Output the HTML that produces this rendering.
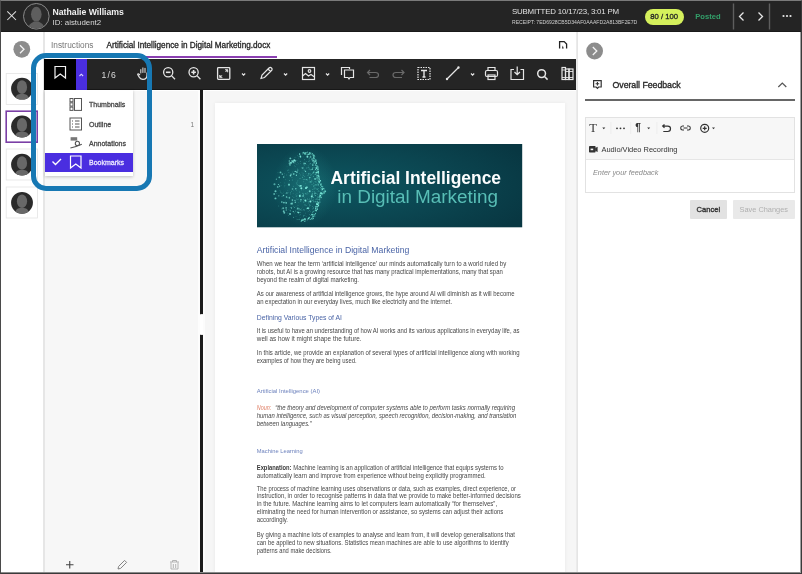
<!DOCTYPE html>
<html><head><meta charset="utf-8">
<style>
*{box-sizing:border-box;margin:0;padding:0}
html,body{width:802px;height:574px;overflow:hidden;background:#fff;font-family:"Liberation Sans",sans-serif}
.a{position:absolute}
.t{position:absolute;white-space:nowrap;line-height:1}
svg{position:absolute;overflow:visible}
</style></head><body>
<div class="a" style="left:0;top:0;width:802px;height:574px;background:#fff;will-change:transform">

<!-- HEADER -->
<div class="a" style="left:0;top:0;width:802px;height:32px;background:#242424;border-bottom:1px solid #1a1a1a"></div>
<svg style="left:0;top:0" width="802" height="32">
  <path d="M7.3 11.3 L16 20 M16 11.3 L7.3 20" stroke="#dedede" stroke-width="1.05" fill="none"/>
  <circle cx="36.3" cy="16.3" r="12.8" fill="#2a2a2a" stroke="#8a8a8a" stroke-width="1"/>
  <clipPath id="ch"><circle cx="36.3" cy="16.3" r="12.3"/></clipPath><g clip-path="url(#ch)" fill="#5e5e5e"><ellipse cx="36.3" cy="14.2" rx="5.3" ry="7.4"/><path d="M28.2 30 c0 -3.6 1.6 -6.4 4.2 -7.4 l1.6 -1.2 h4.6 l1.6 1.2 c2.6 1 4.2 3.8 4.2 7.4z"/></g>
  <!-- separators -->
  <rect x="732.8" y="3.5" width="1.4" height="26" fill="#5e5e5e"/>
  <rect x="768.8" y="3.5" width="1.4" height="26" fill="#5e5e5e"/>
  <path d="M743.5 12.5 L739.5 16.5 L743.5 20.5" stroke="#e6e6e6" stroke-width="1.3" fill="none"/>
  <path d="M758.5 12.5 L762.5 16.5 L758.5 20.5" stroke="#e6e6e6" stroke-width="1.3" fill="none"/>
  <circle cx="783.5" cy="16" r="1.1" fill="#e6e6e6"/><circle cx="787" cy="16" r="1.1" fill="#e6e6e6"/><circle cx="790.5" cy="16" r="1.1" fill="#e6e6e6"/>
</svg>
<div class="t" style="left:52.5px;top:7.7px;font-size:8.7px;font-weight:700;color:#f2f2f2">Nathalie Williams</div>
<div class="t" style="left:52.5px;top:19px;font-size:7.9px;color:#d8d8d8">ID: aistudent2</div>
<div class="t" style="left:512px;top:7.9px;font-size:7.9px;letter-spacing:-0.2px;color:#e0e0e0">SUBMITTED 10/17/23, 3:01 PM</div>
<div class="t" style="left:512px;top:19.5px;font-size:5.1px;color:#cfcfcf">RECEIPT: 7ED6928CB5D34AF0AAAFD2A813BF2E7D</div>
<div class="a" style="left:645px;top:8.5px;width:38.5px;height:16.5px;border-radius:8.25px;background:#d5f05c"></div>
<div class="t" style="left:650.3px;top:12.6px;font-size:7.7px;color:#262626;-webkit-text-stroke:0.3px #262626">80 / 100</div>
<div class="t" style="left:695.3px;top:13px;font-size:7.6px;font-weight:700;color:#33a06a">Posted</div>


<!-- LEFT STRIP -->
<div class="a" style="left:43px;top:32px;width:1.5px;height:542px;background:#e6e6e6"></div>
<svg style="left:0;top:31px" width="43" height="543">
  <circle cx="21.8" cy="18.3" r="8.4" fill="#8c8c8c"/>
  <path d="M20 14.3 L24 18.3 L20 22.3" stroke="#f4f4f4" stroke-width="1.3" fill="none"/>
</svg>
<svg style="left:0;top:0" width="45" height="240">
<rect x="6.2" y="73.5" width="31.3" height="31" fill="#fff" stroke="#e4e4e4" stroke-width="0.8"/>
<clipPath id="c0"><circle cx="22" cy="88.7" r="10.9"/></clipPath>
<circle cx="22" cy="88.7" r="10.9" fill="#2a2a2a"/>
<g clip-path="url(#c0)" fill="#686868"><ellipse cx="22" cy="87.1" rx="5.1" ry="6.8"/><path d="M15.0 100.7 c0 -3 1 -5.5 3 -6.2 l2 -0.5 h4 l2 0.5 c2 0.7 3 3.2 3 6.2z"/></g>
<rect x="6.2" y="111.2" width="31" height="31" fill="#fff" stroke="#7b3fa6" stroke-width="1.6"/>
<clipPath id="c1"><circle cx="22" cy="126.5" r="10.9"/></clipPath>
<circle cx="22" cy="126.5" r="10.9" fill="#2a2a2a"/>
<g clip-path="url(#c1)" fill="#686868"><ellipse cx="22" cy="124.9" rx="5.1" ry="6.8"/><path d="M15.0 138.5 c0 -3 1 -5.5 3 -6.2 l2 -0.5 h4 l2 0.5 c2 0.7 3 3.2 3 6.2z"/></g>
<rect x="6.2" y="149" width="31.3" height="31" fill="#fff" stroke="#e4e4e4" stroke-width="0.8"/>
<clipPath id="c2"><circle cx="22" cy="164.6" r="10.9"/></clipPath>
<circle cx="22" cy="164.6" r="10.9" fill="#2a2a2a"/>
<g clip-path="url(#c2)" fill="#686868"><ellipse cx="22" cy="163.0" rx="5.1" ry="6.8"/><path d="M15.0 176.6 c0 -3 1 -5.5 3 -6.2 l2 -0.5 h4 l2 0.5 c2 0.7 3 3.2 3 6.2z"/></g>
<rect x="6.2" y="187" width="31.3" height="31" fill="#fff" stroke="#e4e4e4" stroke-width="0.8"/>
<clipPath id="c3"><circle cx="22" cy="202.8" r="10.9"/></clipPath>
<circle cx="22" cy="202.8" r="10.9" fill="#2a2a2a"/>
<g clip-path="url(#c3)" fill="#686868"><ellipse cx="22" cy="201.2" rx="5.1" ry="6.8"/><path d="M15.0 214.8 c0 -3 1 -5.5 3 -6.2 l2 -0.5 h4 l2 0.5 c2 0.7 3 3.2 3 6.2z"/></g>
</svg>

<!-- TABS -->
<div class="t" style="left:51px;top:41px;font-size:8.3px;color:#777">Instructions</div>
<div class="t" style="left:106.5px;top:41.6px;font-size:8.2px;color:#262626;-webkit-text-stroke:0.3px #262626">Artificial Intelligence in Digital Marketing.docx</div>
<div class="a" style="left:100px;top:55.5px;width:177px;height:2.5px;background:#8a3fb0"></div>
<svg style="left:0;top:0" width="600" height="60"><path d="M559.6 48.6 v-7 h4.6 l2.4 2.4 v4.6" stroke="#222" stroke-width="1.3" fill="none"/><path d="M561.9 48.6 l0.9 -3.2 l0.9 3.2z" fill="#222"/></svg>

<!-- TOOLBAR -->
<div class="a" style="left:44px;top:59px;width:532px;height:31px;background:#252525;border-bottom:1px solid #181818"></div>
<div class="a" style="left:44px;top:59px;width:32px;height:31px;background:#000"></div>
<div class="a" style="left:76px;top:59px;width:11px;height:31px;background:#4a2ee0"></div>
<svg style="left:0;top:0" width="802" height="100">
  <path d="M55 66.5 h10.5 v11.5 l-5.25 -4 l-5.25 4z" stroke="#f2f2f2" stroke-width="1.2" fill="none"/>
  <path d="M79.5 76 l1.8 -1.8 l1.8 1.8" stroke="#d8d4ff" stroke-width="1.1" fill="none"/>
</svg>
<div class="t" style="left:101.6px;top:71.2px;font-size:8.6px;letter-spacing:1.1px;color:#dcdcdc">1/6</div>
<svg style="left:0;top:0" width="802" height="100" fill="none" stroke="#e6e6e6" stroke-width="1.2">
  <!-- hand -->
  <path d="M140.8 73 v-3.4 M142.9 72.5 v-4.6 M145 72.5 v-4.2" stroke-linecap="round" stroke-width="1"/><path d="M147 72.5 v2.5 c0 2.6 -1.6 4.4 -4 4.4 c-1.8 0 -2.8 -0.8 -3.6 -2 l-1.6 -2.6 c-0.4 -0.7 0.3 -1.3 0.9 -0.9 l1.3 1" stroke-width="1.2" stroke-linejoin="round"/>
  <!-- zoom out -->
  <circle cx="168.2" cy="72.3" r="4.6" stroke-width="1.3"/><path d="M171.5 75.6 L175 79.2" stroke-width="1.3"/><path d="M165.9 72.3 h4.6" stroke-width="1.6"/>
  <!-- zoom in -->
  <circle cx="193.6" cy="72.3" r="4.6" stroke-width="1.3"/><path d="M196.9 75.6 L200.4 79.2" stroke-width="1.3"/><path d="M191.3 72.3 h4.6 M193.6 70 v4.6" stroke-width="1.6"/>
  <!-- fit -->
  <rect x="217.6" y="67.6" width="12.2" height="11.8" rx="0.8" stroke-width="1.3"/><path d="M219.6 77.6 v-2.6 l2.6 2.6z M227.8 69.6 v2.6 l-2.6 -2.6z" fill="#e6e6e6" stroke-width="0.6"/><path d="M220.5 76.7 l1.5 -1.5 M226.9 70.5 l-1.5 1.5" stroke-width="0.9"/>
  <path d="M242 73.5 l1.6 1.6 l1.6 -1.6"/>
  <!-- pencil -->
  <path d="M261 78.5 l1 -3.5 l7 -7 c0.8 -0.8 1.8 -0.8 2.5 0 c0.8 0.8 0.8 1.8 0 2.5 l-7 7z M268 69 l2.5 2.5"/>
  <path d="M284 73.5 l1.6 1.6 l1.6 -1.6"/>
  <!-- image -->
  <rect x="302.5" y="67.5" width="12" height="12"/><circle cx="309.5" cy="71" r="1.3"/><path d="M302.5 76 l3 -2.5 l3 2.5 l2.5 -1.5 l3.5 2.5"/>
  <path d="M326 73.5 l1.6 1.6 l1.6 -1.6"/>
  <!-- comments -->
  <path d="M341.5 75 v-7.5 h8 v1.5"/><path d="M344.5 70 h9 v7.5 h-3.5 l-1 1.5 l-1 -1.5 h-3.5z"/>
  <!-- undo redo dim -->
  <path d="M370 70 l-2.5 2.5 l2.5 2.5 M367.5 72.5 h8 c2 0 3 1 3 2.5 s-1 2.5 -3 2.5 h-6" stroke="#6a6a6a"/>
  <path d="M401.5 70 l2.5 2.5 l-2.5 2.5 M404 72.5 h-8 c-2 0 -3 1 -3 2.5 s1 2.5 3 2.5 h6" stroke="#6a6a6a"/>
  <!-- textbox -->
  <rect x="418" y="67.5" width="12" height="12" stroke-dasharray="1.5 1"/><path d="M421 70.5 h6 M424 70.5 v6.5 M422.5 77 h3" stroke-width="1.4"/>
  <!-- line -->
  <path d="M447 79 L458.5 67.5"/><circle cx="447" cy="79" r="0.6"/><circle cx="458.5" cy="67.5" r="0.6"/>
  <path d="M471 73.5 l1.6 1.6 l1.6 -1.6"/>
  <!-- print -->
  <path d="M488 70.5 v-3 h7 v3"/><rect x="485.5" y="70.5" width="12" height="6" rx="1.5"/><rect x="488" y="75" width="7" height="4.5"/>
  <!-- download -->
  <path d="M514 69.5 h-3 v10 h12.5 v-10 h-3"/><path d="M517.2 66.5 v8 M514.5 72 l2.7 2.7 l2.7 -2.7"/>
  <!-- search -->
  <circle cx="541.6" cy="73.6" r="3.9" stroke-width="1.5"/><path d="M544.5 76.5 L547.6 79.6" stroke-width="1.5"/>
  <!-- books -->
  <rect x="562" y="67.5" width="3.5" height="12"/><rect x="565.5" y="69" width="3.5" height="10.5"/><rect x="569" y="69" width="4" height="10.5"/><path d="M562 70 h3.5 M562 77.5 h3.5 M565.5 71.5 h7.5 M565.5 77.5 h7.5" stroke-width="0.9"/>
</svg>

<!-- LEFT PANEL -->
<div class="a" style="left:45px;top:90px;width:155px;height:484px;background:#f7f7f7;border-top:1.5px solid #fff;border-right:2px solid #fdfdfd"></div>
<div class="t" style="left:190.5px;top:121.5px;font-size:6.5px;color:#777">1</div>
<svg style="left:0;top:0" width="802" height="574" fill="none" stroke="#444" stroke-width="1.1">
  <path d="M66 564.7 h7.5 M69.75 561 v7.5"/>
  <path d="M118 569 l0.6 -2.6 l6 -6 l2 2 l-6 6z" stroke="#777" stroke-width="0.9"/>
  <path d="M170 562 h9 M172.5 562 v-1.5 h4 v1.5 M171 562.5 v6.5 h7 v-6.5 M173.3 564 v4 M175.7 564 v4" stroke="#aaa" stroke-width="0.9"/>
</svg>

<!-- DIVIDER -->
<div class="a" style="left:200px;top:90px;width:3px;height:484px;background:#1b1b1b"></div>
<div class="a" style="left:200px;top:314px;width:6.8px;height:21px;background:#fff;border-radius:1px 2.5px 2.5px 1px;border:1px solid #e8e8e8;border-left:none"></div>

<!-- DOC AREA -->
<div class="a" style="left:203px;top:90px;width:372.5px;height:484px;background:#f6f6f6;border-top:1.5px solid #fff;border-left:2px solid #fcfcfc"></div>
<div class="a" style="left:214.5px;top:102.5px;width:350.5px;height:480px;background:#fff;box-shadow:0 0 4px rgba(0,0,0,0.06)"></div>
<!--DOC--><svg style="left:256.5px;top:144.3px" width="265.2" height="83.3">
<defs>
<radialGradient id="bg" cx="0.3" cy="0.5" r="0.8">
<stop offset="0" stop-color="#0d5660"/><stop offset="0.55" stop-color="#0b4550"/><stop offset="1" stop-color="#083742"/>
</radialGradient>
<radialGradient id="glow" cx="0.5" cy="0.5" r="0.5">
<stop offset="0" stop-color="#3fc0b8" stop-opacity="0.26"/><stop offset="1" stop-color="#3fc0b8" stop-opacity="0"/>
</radialGradient>
</defs>
<rect x="0" y="0" width="265.2" height="83.3" fill="url(#bg)"/>
<ellipse cx="48" cy="42" rx="32" ry="40" fill="url(#glow)"/>
<circle cx="20.7" cy="42.9" r="0.87" fill="#8af5e6" fill-opacity="0.56"/><circle cx="63.3" cy="51.5" r="0.77" fill="#8af5e6" fill-opacity="0.84"/><circle cx="48.5" cy="27.3" r="0.66" fill="#8af5e6" fill-opacity="0.89"/><circle cx="48.9" cy="43.9" r="0.97" fill="#8af5e6" fill-opacity="0.79"/><circle cx="42.8" cy="41.9" r="0.76" fill="#8af5e6" fill-opacity="0.78"/><circle cx="26.2" cy="64.2" r="0.99" fill="#8af5e6" fill-opacity="0.58"/><circle cx="38.3" cy="27.4" r="0.64" fill="#8af5e6" fill-opacity="0.86"/><circle cx="36.4" cy="18.3" r="0.90" fill="#8af5e6" fill-opacity="0.62"/><circle cx="60.9" cy="23.2" r="0.61" fill="#8af5e6" fill-opacity="0.66"/><circle cx="32.0" cy="40.8" r="1.01" fill="#8af5e6" fill-opacity="0.75"/><circle cx="37.9" cy="56.4" r="0.62" fill="#8af5e6" fill-opacity="0.56"/><circle cx="58.0" cy="49.2" r="0.74" fill="#8af5e6" fill-opacity="0.71"/><circle cx="38.2" cy="16.9" r="0.93" fill="#8af5e6" fill-opacity="0.62"/><circle cx="17.2" cy="49.9" r="1.00" fill="#8af5e6" fill-opacity="0.55"/><circle cx="55.9" cy="21.3" r="0.64" fill="#8af5e6" fill-opacity="0.56"/><circle cx="29.2" cy="58.9" r="0.82" fill="#8af5e6" fill-opacity="0.78"/><circle cx="25.3" cy="30.1" r="0.72" fill="#8af5e6" fill-opacity="0.78"/><circle cx="36.7" cy="30.0" r="0.94" fill="#8af5e6" fill-opacity="0.56"/><circle cx="26.7" cy="67.2" r="0.93" fill="#8af5e6" fill-opacity="0.68"/><circle cx="48.4" cy="56.5" r="0.95" fill="#8af5e6" fill-opacity="0.95"/><circle cx="21.8" cy="51.8" r="0.66" fill="#8af5e6" fill-opacity="0.64"/><circle cx="54.9" cy="70.6" r="0.94" fill="#8af5e6" fill-opacity="0.57"/><circle cx="32.7" cy="19.4" r="1.05" fill="#8af5e6" fill-opacity="0.59"/><circle cx="26.7" cy="33.0" r="0.63" fill="#8af5e6" fill-opacity="0.76"/><circle cx="47.1" cy="19.2" r="0.82" fill="#8af5e6" fill-opacity="0.58"/><circle cx="45.8" cy="24.2" r="0.62" fill="#8af5e6" fill-opacity="0.60"/><circle cx="42.9" cy="52.6" r="0.75" fill="#8af5e6" fill-opacity="0.80"/><circle cx="32.3" cy="17.1" r="0.74" fill="#8af5e6" fill-opacity="0.67"/><circle cx="18.5" cy="47.3" r="1.03" fill="#8af5e6" fill-opacity="0.71"/><circle cx="50.4" cy="12.7" r="0.96" fill="#8af5e6" fill-opacity="0.86"/><circle cx="21.5" cy="40.5" r="0.62" fill="#8af5e6" fill-opacity="0.71"/><circle cx="51.4" cy="64.3" r="0.94" fill="#8af5e6" fill-opacity="0.67"/><circle cx="55.1" cy="25.4" r="0.66" fill="#8af5e6" fill-opacity="0.74"/><circle cx="39.9" cy="28.0" r="0.87" fill="#8af5e6" fill-opacity="0.77"/><circle cx="26.5" cy="51.6" r="0.76" fill="#8af5e6" fill-opacity="0.73"/><circle cx="29.1" cy="63.9" r="0.79" fill="#8af5e6" fill-opacity="0.70"/><circle cx="49.0" cy="44.3" r="0.72" fill="#8af5e6" fill-opacity="0.98"/><circle cx="42.6" cy="10.0" r="0.67" fill="#8af5e6" fill-opacity="0.86"/><circle cx="54.8" cy="52.6" r="1.01" fill="#8af5e6" fill-opacity="0.92"/><circle cx="29.5" cy="53.1" r="0.75" fill="#8af5e6" fill-opacity="0.75"/><circle cx="34.0" cy="18.7" r="0.99" fill="#8af5e6" fill-opacity="0.76"/><circle cx="52.7" cy="47.2" r="0.95" fill="#8af5e6" fill-opacity="0.76"/><circle cx="43.4" cy="12.4" r="0.85" fill="#8af5e6" fill-opacity="0.87"/><circle cx="50.7" cy="64.2" r="0.82" fill="#8af5e6" fill-opacity="0.95"/><circle cx="33.3" cy="14.4" r="0.88" fill="#8af5e6" fill-opacity="0.69"/><circle cx="36.3" cy="67.6" r="0.66" fill="#8af5e6" fill-opacity="0.75"/><circle cx="35.5" cy="45.0" r="0.82" fill="#8af5e6" fill-opacity="0.59"/><circle cx="40.6" cy="68.3" r="0.68" fill="#8af5e6" fill-opacity="0.55"/><circle cx="17.5" cy="40.2" r="1.04" fill="#8af5e6" fill-opacity="0.56"/><circle cx="65.5" cy="45.5" r="0.65" fill="#8af5e6" fill-opacity="0.79"/><circle cx="24.8" cy="58.0" r="0.84" fill="#8af5e6" fill-opacity="0.62"/><circle cx="27.3" cy="68.7" r="0.94" fill="#8af5e6" fill-opacity="0.66"/><circle cx="35.1" cy="59.6" r="1.04" fill="#8af5e6" fill-opacity="0.58"/><circle cx="22.3" cy="33.4" r="0.83" fill="#8af5e6" fill-opacity="0.56"/><circle cx="34.1" cy="59.7" r="0.87" fill="#8af5e6" fill-opacity="0.56"/><circle cx="33.0" cy="70.1" r="1.02" fill="#8af5e6" fill-opacity="0.67"/><circle cx="52.8" cy="33.6" r="0.67" fill="#8af5e6" fill-opacity="0.82"/><circle cx="18.5" cy="54.4" r="0.96" fill="#8af5e6" fill-opacity="0.71"/><circle cx="37.3" cy="16.2" r="1.01" fill="#8af5e6" fill-opacity="0.84"/><circle cx="64.3" cy="49.6" r="0.90" fill="#8af5e6" fill-opacity="0.76"/><circle cx="23.5" cy="28.4" r="0.92" fill="#8af5e6" fill-opacity="0.62"/><circle cx="50.0" cy="43.2" r="0.80" fill="#8af5e6" fill-opacity="0.98"/><circle cx="22.6" cy="42.1" r="0.67" fill="#8af5e6" fill-opacity="0.75"/><circle cx="39.4" cy="31.2" r="0.68" fill="#8af5e6" fill-opacity="0.76"/><circle cx="34.7" cy="16.9" r="0.61" fill="#8af5e6" fill-opacity="0.67"/><circle cx="44.3" cy="44.3" r="1.01" fill="#8af5e6" fill-opacity="0.91"/><circle cx="38.8" cy="44.7" r="0.78" fill="#8af5e6" fill-opacity="0.69"/><circle cx="38.3" cy="58.2" r="0.80" fill="#8af5e6" fill-opacity="0.68"/><circle cx="48.2" cy="19.4" r="0.61" fill="#8af5e6" fill-opacity="0.81"/><circle cx="41.6" cy="68.6" r="0.79" fill="#8af5e6" fill-opacity="0.84"/><circle cx="45.1" cy="23.8" r="0.63" fill="#8af5e6" fill-opacity="0.60"/><circle cx="33.5" cy="31.6" r="0.85" fill="#8af5e6" fill-opacity="0.82"/><circle cx="33.0" cy="20.9" r="0.86" fill="#8af5e6" fill-opacity="0.55"/><circle cx="34.0" cy="30.2" r="0.77" fill="#8af5e6" fill-opacity="0.57"/><circle cx="42.8" cy="51.7" r="0.94" fill="#8af5e6" fill-opacity="0.92"/><circle cx="32.4" cy="53.9" r="0.80" fill="#8af5e6" fill-opacity="0.61"/><circle cx="60.2" cy="60.2" r="1.02" fill="#8af5e6" fill-opacity="0.99"/><circle cx="35.4" cy="56.1" r="0.80" fill="#8af5e6" fill-opacity="0.71"/><circle cx="53.6" cy="12.9" r="0.91" fill="#8af5e6" fill-opacity="0.57"/><circle cx="26.9" cy="58.6" r="0.91" fill="#8af5e6" fill-opacity="0.65"/><circle cx="29.3" cy="66.0" r="0.72" fill="#8af5e6" fill-opacity="0.56"/><circle cx="56.2" cy="16.6" r="1.04" fill="#8af5e6" fill-opacity="0.66"/><circle cx="29.9" cy="49.0" r="0.74" fill="#8af5e6" fill-opacity="0.65"/><circle cx="19.4" cy="35.2" r="0.61" fill="#8af5e6" fill-opacity="0.59"/><circle cx="61.3" cy="27.7" r="0.72" fill="#8af5e6" fill-opacity="0.92"/><circle cx="59.9" cy="28.7" r="0.77" fill="#8af5e6" fill-opacity="0.93"/><circle cx="55.2" cy="51.0" r="0.68" fill="#8af5e6" fill-opacity="0.64"/><circle cx="53.4" cy="57.5" r="1.00" fill="#8af5e6" fill-opacity="0.92"/><circle cx="35.9" cy="17.3" r="1.00" fill="#8af5e6" fill-opacity="0.78"/><circle cx="44.0" cy="55.7" r="0.77" fill="#8af5e6" fill-opacity="0.69"/><circle cx="43.9" cy="41.8" r="0.92" fill="#8af5e6" fill-opacity="0.92"/><circle cx="58.1" cy="35.1" r="0.77" fill="#8af5e6" fill-opacity="1.03"/><circle cx="34.5" cy="64.0" r="0.64" fill="#8af5e6" fill-opacity="0.69"/><circle cx="40.8" cy="64.6" r="0.99" fill="#8af5e6" fill-opacity="0.61"/><circle cx="46.1" cy="52.0" r="0.67" fill="#8af5e6" fill-opacity="0.89"/><circle cx="45.0" cy="75.3" r="0.43" fill="#6fe8d8" fill-opacity="0.43"/><circle cx="50.0" cy="50.6" r="0.38" fill="#6fe8d8" fill-opacity="0.51"/><circle cx="40.6" cy="26.1" r="0.54" fill="#6fe8d8" fill-opacity="0.42"/><circle cx="57.3" cy="47.8" r="0.48" fill="#6fe8d8" fill-opacity="0.54"/><circle cx="49.5" cy="24.0" r="0.47" fill="#6fe8d8" fill-opacity="0.50"/><circle cx="26.8" cy="33.3" r="0.34" fill="#6fe8d8" fill-opacity="0.35"/><circle cx="59.1" cy="34.8" r="0.32" fill="#6fe8d8" fill-opacity="0.48"/><circle cx="46.2" cy="31.3" r="0.51" fill="#6fe8d8" fill-opacity="0.35"/><circle cx="62.5" cy="52.4" r="0.54" fill="#6fe8d8" fill-opacity="0.46"/><circle cx="27.9" cy="41.4" r="0.37" fill="#6fe8d8" fill-opacity="0.43"/><circle cx="64.7" cy="48.7" r="0.53" fill="#6fe8d8" fill-opacity="0.53"/><circle cx="52.8" cy="55.0" r="0.46" fill="#6fe8d8" fill-opacity="0.69"/><circle cx="42.6" cy="64.7" r="0.52" fill="#6fe8d8" fill-opacity="0.45"/><circle cx="33.5" cy="67.0" r="0.52" fill="#6fe8d8" fill-opacity="0.38"/><circle cx="55.1" cy="49.1" r="0.32" fill="#6fe8d8" fill-opacity="0.65"/><circle cx="38.8" cy="13.2" r="0.38" fill="#6fe8d8" fill-opacity="0.41"/><circle cx="53.6" cy="19.7" r="0.45" fill="#6fe8d8" fill-opacity="0.71"/><circle cx="34.4" cy="19.8" r="0.37" fill="#6fe8d8" fill-opacity="0.37"/><circle cx="52.2" cy="13.9" r="0.47" fill="#6fe8d8" fill-opacity="0.55"/><circle cx="42.9" cy="71.1" r="0.35" fill="#6fe8d8" fill-opacity="0.48"/><circle cx="56.5" cy="56.8" r="0.45" fill="#6fe8d8" fill-opacity="0.48"/><circle cx="34.1" cy="18.9" r="0.51" fill="#6fe8d8" fill-opacity="0.45"/><circle cx="56.1" cy="28.2" r="0.34" fill="#6fe8d8" fill-opacity="0.60"/><circle cx="28.6" cy="57.1" r="0.43" fill="#6fe8d8" fill-opacity="0.36"/><circle cx="44.3" cy="45.9" r="0.39" fill="#6fe8d8" fill-opacity="0.53"/><circle cx="40.9" cy="36.5" r="0.37" fill="#6fe8d8" fill-opacity="0.53"/><circle cx="39.3" cy="52.3" r="0.51" fill="#6fe8d8" fill-opacity="0.40"/><circle cx="46.5" cy="50.4" r="0.50" fill="#6fe8d8" fill-opacity="0.49"/><circle cx="55.8" cy="72.0" r="0.41" fill="#6fe8d8" fill-opacity="0.46"/><circle cx="58.8" cy="23.5" r="0.52" fill="#6fe8d8" fill-opacity="0.46"/><circle cx="59.6" cy="45.7" r="0.39" fill="#6fe8d8" fill-opacity="0.39"/><circle cx="51.7" cy="58.9" r="0.38" fill="#6fe8d8" fill-opacity="0.62"/><circle cx="55.8" cy="47.5" r="0.45" fill="#6fe8d8" fill-opacity="0.51"/><circle cx="47.1" cy="65.5" r="0.40" fill="#6fe8d8" fill-opacity="0.37"/><circle cx="37.5" cy="13.5" r="0.33" fill="#6fe8d8" fill-opacity="0.42"/><circle cx="56.7" cy="27.7" r="0.36" fill="#6fe8d8" fill-opacity="0.47"/><circle cx="46.7" cy="65.7" r="0.50" fill="#6fe8d8" fill-opacity="0.51"/><circle cx="32.9" cy="52.9" r="0.42" fill="#6fe8d8" fill-opacity="0.41"/><circle cx="21.0" cy="28.8" r="0.45" fill="#6fe8d8" fill-opacity="0.35"/><circle cx="47.4" cy="32.7" r="0.42" fill="#6fe8d8" fill-opacity="0.52"/><circle cx="47.5" cy="56.2" r="0.32" fill="#6fe8d8" fill-opacity="0.42"/><circle cx="47.4" cy="15.7" r="0.47" fill="#6fe8d8" fill-opacity="0.53"/><circle cx="48.4" cy="35.6" r="0.44" fill="#6fe8d8" fill-opacity="0.35"/><circle cx="54.9" cy="37.6" r="0.46" fill="#6fe8d8" fill-opacity="0.51"/><circle cx="52.1" cy="38.0" r="0.48" fill="#6fe8d8" fill-opacity="0.58"/><circle cx="51.6" cy="17.4" r="0.36" fill="#6fe8d8" fill-opacity="0.68"/><circle cx="59.1" cy="38.0" r="0.53" fill="#6fe8d8" fill-opacity="0.49"/><circle cx="23.0" cy="46.6" r="0.44" fill="#6fe8d8" fill-opacity="0.36"/><circle cx="55.9" cy="17.0" r="0.37" fill="#6fe8d8" fill-opacity="0.59"/><circle cx="59.3" cy="60.7" r="0.47" fill="#6fe8d8" fill-opacity="0.60"/><circle cx="36.9" cy="53.5" r="0.39" fill="#6fe8d8" fill-opacity="0.37"/><circle cx="52.2" cy="16.6" r="0.40" fill="#6fe8d8" fill-opacity="0.53"/><circle cx="56.4" cy="20.7" r="0.48" fill="#6fe8d8" fill-opacity="0.52"/><circle cx="61.2" cy="32.9" r="0.53" fill="#6fe8d8" fill-opacity="0.46"/><circle cx="54.7" cy="56.0" r="0.44" fill="#6fe8d8" fill-opacity="0.58"/><circle cx="59.0" cy="58.5" r="0.49" fill="#6fe8d8" fill-opacity="0.48"/><circle cx="50.2" cy="55.5" r="0.49" fill="#6fe8d8" fill-opacity="0.47"/><circle cx="55.5" cy="67.2" r="0.30" fill="#6fe8d8" fill-opacity="0.66"/><circle cx="38.4" cy="66.4" r="0.31" fill="#6fe8d8" fill-opacity="0.46"/><circle cx="43.5" cy="65.7" r="0.42" fill="#6fe8d8" fill-opacity="0.59"/><circle cx="52.7" cy="37.0" r="0.36" fill="#6fe8d8" fill-opacity="0.52"/><circle cx="46.2" cy="35.5" r="0.46" fill="#6fe8d8" fill-opacity="0.59"/><circle cx="42.6" cy="65.0" r="0.39" fill="#6fe8d8" fill-opacity="0.48"/><circle cx="62.1" cy="47.2" r="0.36" fill="#6fe8d8" fill-opacity="0.74"/><circle cx="60.0" cy="36.5" r="0.31" fill="#6fe8d8" fill-opacity="0.65"/><circle cx="43.1" cy="73.7" r="0.33" fill="#6fe8d8" fill-opacity="0.36"/><circle cx="28.5" cy="35.6" r="0.37" fill="#6fe8d8" fill-opacity="0.40"/><circle cx="46.7" cy="23.2" r="0.36" fill="#6fe8d8" fill-opacity="0.60"/><circle cx="56.6" cy="67.7" r="0.40" fill="#6fe8d8" fill-opacity="0.55"/><circle cx="28.9" cy="61.8" r="0.35" fill="#6fe8d8" fill-opacity="0.43"/><circle cx="52.5" cy="61.9" r="0.46" fill="#6fe8d8" fill-opacity="0.68"/><circle cx="58.3" cy="51.6" r="0.55" fill="#6fe8d8" fill-opacity="0.67"/><circle cx="55.5" cy="64.9" r="0.31" fill="#6fe8d8" fill-opacity="0.72"/><circle cx="27.3" cy="29.4" r="0.46" fill="#6fe8d8" fill-opacity="0.35"/><circle cx="58.7" cy="28.9" r="0.53" fill="#6fe8d8" fill-opacity="0.66"/><circle cx="53.8" cy="25.7" r="0.52" fill="#6fe8d8" fill-opacity="0.59"/><circle cx="63.5" cy="54.0" r="0.40" fill="#6fe8d8" fill-opacity="0.40"/><circle cx="53.5" cy="67.8" r="0.42" fill="#6fe8d8" fill-opacity="0.44"/><circle cx="52.5" cy="60.3" r="0.45" fill="#6fe8d8" fill-opacity="0.43"/><circle cx="56.7" cy="28.0" r="0.46" fill="#6fe8d8" fill-opacity="0.59"/><circle cx="57.2" cy="41.2" r="0.48" fill="#6fe8d8" fill-opacity="0.50"/><circle cx="56.8" cy="39.1" r="0.47" fill="#6fe8d8" fill-opacity="0.75"/><circle cx="56.2" cy="53.4" r="0.50" fill="#6fe8d8" fill-opacity="0.73"/><circle cx="39.9" cy="16.5" r="0.43" fill="#6fe8d8" fill-opacity="0.47"/><circle cx="38.4" cy="56.1" r="0.31" fill="#6fe8d8" fill-opacity="0.50"/><circle cx="46.8" cy="55.3" r="0.50" fill="#6fe8d8" fill-opacity="0.47"/><circle cx="40.4" cy="24.8" r="0.36" fill="#6fe8d8" fill-opacity="0.39"/><circle cx="60.6" cy="39.9" r="0.46" fill="#6fe8d8" fill-opacity="0.70"/><circle cx="35.7" cy="52.4" r="0.33" fill="#6fe8d8" fill-opacity="0.39"/><circle cx="57.1" cy="72.0" r="0.38" fill="#6fe8d8" fill-opacity="0.76"/><circle cx="55.8" cy="24.3" r="0.32" fill="#6fe8d8" fill-opacity="0.65"/><circle cx="30.2" cy="69.1" r="0.48" fill="#6fe8d8" fill-opacity="0.37"/><circle cx="38.9" cy="50.8" r="0.35" fill="#6fe8d8" fill-opacity="0.46"/><circle cx="32.0" cy="26.0" r="0.35" fill="#6fe8d8" fill-opacity="0.35"/><circle cx="28.0" cy="58.8" r="0.46" fill="#6fe8d8" fill-opacity="0.37"/><circle cx="40.0" cy="65.6" r="0.34" fill="#6fe8d8" fill-opacity="0.52"/><circle cx="39.9" cy="20.2" r="0.37" fill="#6fe8d8" fill-opacity="0.53"/><circle cx="45.8" cy="63.0" r="0.33" fill="#6fe8d8" fill-opacity="0.51"/><circle cx="57.0" cy="70.8" r="0.52" fill="#6fe8d8" fill-opacity="0.56"/><circle cx="60.4" cy="54.3" r="0.33" fill="#6fe8d8" fill-opacity="0.45"/><circle cx="47.4" cy="53.8" r="0.41" fill="#6fe8d8" fill-opacity="0.45"/><circle cx="58.6" cy="15.4" r="0.47" fill="#6fe8d8" fill-opacity="0.79"/><circle cx="35.4" cy="36.0" r="0.50" fill="#6fe8d8" fill-opacity="0.42"/><circle cx="42.5" cy="48.0" r="0.48" fill="#6fe8d8" fill-opacity="0.42"/><circle cx="51.0" cy="49.3" r="0.34" fill="#6fe8d8" fill-opacity="0.54"/><circle cx="46.1" cy="73.9" r="0.42" fill="#6fe8d8" fill-opacity="0.40"/><circle cx="48.2" cy="39.7" r="0.33" fill="#6fe8d8" fill-opacity="0.48"/><circle cx="51.8" cy="23.6" r="0.50" fill="#6fe8d8" fill-opacity="0.40"/><circle cx="24.9" cy="65.3" r="0.38" fill="#6fe8d8" fill-opacity="0.40"/><circle cx="36.6" cy="73.4" r="0.54" fill="#6fe8d8" fill-opacity="0.46"/><circle cx="49.3" cy="65.5" r="0.32" fill="#6fe8d8" fill-opacity="0.39"/><circle cx="46.4" cy="31.8" r="0.32" fill="#6fe8d8" fill-opacity="0.42"/><circle cx="47.2" cy="21.5" r="0.41" fill="#6fe8d8" fill-opacity="0.37"/><circle cx="55.3" cy="20.1" r="0.53" fill="#6fe8d8" fill-opacity="0.63"/><circle cx="58.6" cy="40.9" r="0.49" fill="#6fe8d8" fill-opacity="0.63"/><circle cx="31.9" cy="65.6" r="0.37" fill="#6fe8d8" fill-opacity="0.38"/><circle cx="45.4" cy="30.2" r="0.30" fill="#6fe8d8" fill-opacity="0.35"/><circle cx="59.0" cy="44.7" r="0.47" fill="#6fe8d8" fill-opacity="0.68"/><circle cx="39.0" cy="62.5" r="0.32" fill="#6fe8d8" fill-opacity="0.52"/><circle cx="56.3" cy="28.2" r="0.55" fill="#6fe8d8" fill-opacity="0.72"/><circle cx="37.6" cy="21.8" r="0.35" fill="#6fe8d8" fill-opacity="0.49"/><circle cx="61.8" cy="44.6" r="0.40" fill="#6fe8d8" fill-opacity="0.50"/><circle cx="47.5" cy="66.2" r="0.41" fill="#6fe8d8" fill-opacity="0.51"/><circle cx="59.8" cy="57.7" r="0.47" fill="#6fe8d8" fill-opacity="0.56"/><circle cx="59.2" cy="66.6" r="0.33" fill="#6fe8d8" fill-opacity="0.55"/><circle cx="59.9" cy="32.3" r="0.40" fill="#6fe8d8" fill-opacity="0.44"/><circle cx="62.1" cy="42.4" r="0.35" fill="#6fe8d8" fill-opacity="0.41"/><circle cx="55.3" cy="17.6" r="0.38" fill="#6fe8d8" fill-opacity="0.54"/><circle cx="56.4" cy="28.9" r="0.37" fill="#6fe8d8" fill-opacity="0.74"/><circle cx="45.0" cy="28.1" r="0.32" fill="#6fe8d8" fill-opacity="0.44"/><circle cx="33.3" cy="63.6" r="0.49" fill="#6fe8d8" fill-opacity="0.46"/><circle cx="57.5" cy="14.9" r="0.50" fill="#6fe8d8" fill-opacity="0.53"/><circle cx="58.1" cy="37.7" r="0.47" fill="#6fe8d8" fill-opacity="0.65"/><circle cx="46.0" cy="9.4" r="0.36" fill="#6fe8d8" fill-opacity="0.41"/><circle cx="27.6" cy="42.8" r="0.34" fill="#6fe8d8" fill-opacity="0.39"/><circle cx="56.4" cy="32.2" r="0.51" fill="#6fe8d8" fill-opacity="0.61"/><circle cx="51.2" cy="57.8" r="0.46" fill="#6fe8d8" fill-opacity="0.54"/><circle cx="52.6" cy="17.4" r="0.31" fill="#6fe8d8" fill-opacity="0.42"/><circle cx="58.0" cy="40.3" r="0.30" fill="#6fe8d8" fill-opacity="0.66"/><circle cx="49.6" cy="64.4" r="0.53" fill="#6fe8d8" fill-opacity="0.36"/><circle cx="52.7" cy="66.6" r="0.38" fill="#6fe8d8" fill-opacity="0.68"/><circle cx="40.7" cy="18.7" r="0.33" fill="#6fe8d8" fill-opacity="0.37"/><circle cx="55.9" cy="45.5" r="0.49" fill="#6fe8d8" fill-opacity="0.67"/><circle cx="42.9" cy="48.1" r="0.37" fill="#6fe8d8" fill-opacity="0.57"/><circle cx="32.0" cy="39.2" r="0.44" fill="#6fe8d8" fill-opacity="0.43"/><circle cx="55.5" cy="24.3" r="0.46" fill="#6fe8d8" fill-opacity="0.74"/><circle cx="57.1" cy="23.3" r="0.38" fill="#6fe8d8" fill-opacity="0.58"/><circle cx="43.7" cy="11.0" r="0.43" fill="#6fe8d8" fill-opacity="0.47"/><circle cx="57.3" cy="30.7" r="0.35" fill="#6fe8d8" fill-opacity="0.46"/><circle cx="32.0" cy="53.5" r="0.47" fill="#6fe8d8" fill-opacity="0.35"/><circle cx="46.0" cy="29.1" r="0.39" fill="#6fe8d8" fill-opacity="0.48"/><circle cx="46.3" cy="37.8" r="0.48" fill="#6fe8d8" fill-opacity="0.42"/><circle cx="60.7" cy="55.6" r="0.34" fill="#6fe8d8" fill-opacity="0.83"/><circle cx="40.2" cy="40.3" r="0.51" fill="#6fe8d8" fill-opacity="0.36"/><circle cx="43.3" cy="19.4" r="0.33" fill="#6fe8d8" fill-opacity="0.52"/><circle cx="63.2" cy="44.9" r="0.34" fill="#6fe8d8" fill-opacity="0.72"/><circle cx="44.8" cy="64.6" r="0.34" fill="#6fe8d8" fill-opacity="0.43"/><circle cx="55.7" cy="70.4" r="0.55" fill="#6fe8d8" fill-opacity="0.72"/><circle cx="31.9" cy="28.5" r="0.42" fill="#6fe8d8" fill-opacity="0.46"/><circle cx="32.6" cy="36.6" r="0.51" fill="#6fe8d8" fill-opacity="0.41"/><circle cx="53.5" cy="31.4" r="0.38" fill="#6fe8d8" fill-opacity="0.55"/><circle cx="36.3" cy="62.2" r="0.44" fill="#6fe8d8" fill-opacity="0.38"/><circle cx="29.3" cy="31.0" r="0.49" fill="#6fe8d8" fill-opacity="0.39"/><circle cx="33.4" cy="49.0" r="0.41" fill="#6fe8d8" fill-opacity="0.42"/><circle cx="43.7" cy="57.2" r="0.55" fill="#6fe8d8" fill-opacity="0.43"/><circle cx="40.7" cy="55.7" r="0.40" fill="#6fe8d8" fill-opacity="0.49"/><circle cx="56.2" cy="72.2" r="0.54" fill="#6fe8d8" fill-opacity="0.47"/><circle cx="48.1" cy="61.0" r="0.50" fill="#6fe8d8" fill-opacity="0.60"/><circle cx="39.0" cy="72.7" r="0.34" fill="#6fe8d8" fill-opacity="0.43"/><circle cx="39.6" cy="39.0" r="0.54" fill="#6fe8d8" fill-opacity="0.40"/><circle cx="64.5" cy="46.0" r="0.49" fill="#6fe8d8" fill-opacity="0.72"/><circle cx="66.7" cy="44.0" r="0.33" fill="#6fe8d8" fill-opacity="0.66"/><circle cx="41.5" cy="14.1" r="0.38" fill="#6fe8d8" fill-opacity="0.47"/><circle cx="51.0" cy="31.5" r="0.42" fill="#6fe8d8" fill-opacity="0.61"/><circle cx="42.7" cy="29.7" r="0.36" fill="#6fe8d8" fill-opacity="0.53"/><circle cx="54.8" cy="36.2" r="0.42" fill="#6fe8d8" fill-opacity="0.73"/><circle cx="46.9" cy="75.2" r="0.34" fill="#6fe8d8" fill-opacity="0.37"/><circle cx="50.3" cy="48.8" r="0.48" fill="#6fe8d8" fill-opacity="0.38"/><circle cx="36.3" cy="42.2" r="0.46" fill="#6fe8d8" fill-opacity="0.48"/><circle cx="25.1" cy="52.5" r="0.51" fill="#6fe8d8" fill-opacity="0.39"/><circle cx="23.5" cy="48.0" r="0.51" fill="#6fe8d8" fill-opacity="0.36"/><circle cx="53.4" cy="11.5" r="0.35" fill="#6fe8d8" fill-opacity="0.64"/><circle cx="57.2" cy="44.1" r="0.55" fill="#6fe8d8" fill-opacity="0.51"/><circle cx="60.5" cy="45.5" r="0.43" fill="#6fe8d8" fill-opacity="0.75"/><circle cx="52.8" cy="33.2" r="0.47" fill="#6fe8d8" fill-opacity="0.66"/><circle cx="43.6" cy="55.8" r="0.50" fill="#6fe8d8" fill-opacity="0.44"/><circle cx="25.8" cy="49.6" r="0.36" fill="#6fe8d8" fill-opacity="0.35"/><circle cx="47.8" cy="71.3" r="0.44" fill="#6fe8d8" fill-opacity="0.59"/><circle cx="24.9" cy="57.2" r="0.39" fill="#6fe8d8" fill-opacity="0.36"/><circle cx="38.2" cy="22.3" r="0.41" fill="#6fe8d8" fill-opacity="0.42"/><circle cx="49.6" cy="11.1" r="0.31" fill="#6fe8d8" fill-opacity="0.64"/><circle cx="41.3" cy="41.4" r="0.50" fill="#6fe8d8" fill-opacity="0.41"/><circle cx="48.7" cy="69.1" r="0.31" fill="#6fe8d8" fill-opacity="0.56"/><circle cx="46.1" cy="26.1" r="0.49" fill="#6fe8d8" fill-opacity="0.36"/><circle cx="55.6" cy="56.2" r="0.48" fill="#6fe8d8" fill-opacity="0.60"/><circle cx="47.6" cy="25.9" r="0.35" fill="#6fe8d8" fill-opacity="0.60"/><circle cx="54.0" cy="16.8" r="0.37" fill="#6fe8d8" fill-opacity="0.39"/><circle cx="61.0" cy="28.2" r="0.40" fill="#6fe8d8" fill-opacity="0.38"/><circle cx="49.2" cy="42.5" r="0.39" fill="#6fe8d8" fill-opacity="0.51"/><circle cx="52.2" cy="25.0" r="0.52" fill="#6fe8d8" fill-opacity="0.51"/><circle cx="50.6" cy="54.7" r="0.41" fill="#6fe8d8" fill-opacity="0.45"/><circle cx="41.0" cy="61.4" r="0.44" fill="#6fe8d8" fill-opacity="0.46"/><circle cx="51.2" cy="22.9" r="0.33" fill="#6fe8d8" fill-opacity="0.65"/><circle cx="47.9" cy="26.5" r="0.47" fill="#6fe8d8" fill-opacity="0.48"/><circle cx="58.6" cy="55.5" r="0.36" fill="#6fe8d8" fill-opacity="0.67"/><circle cx="32.0" cy="69.1" r="0.33" fill="#6fe8d8" fill-opacity="0.39"/><circle cx="33.2" cy="66.3" r="0.51" fill="#6fe8d8" fill-opacity="0.47"/><circle cx="65.7" cy="47.0" r="0.43" fill="#6fe8d8" fill-opacity="0.58"/><circle cx="40.3" cy="11.7" r="0.40" fill="#6fe8d8" fill-opacity="0.45"/><circle cx="59.6" cy="49.3" r="0.38" fill="#6fe8d8" fill-opacity="0.60"/><circle cx="58.4" cy="57.6" r="0.36" fill="#6fe8d8" fill-opacity="0.61"/><circle cx="55.8" cy="25.7" r="0.41" fill="#6fe8d8" fill-opacity="0.49"/><circle cx="42.9" cy="34.2" r="0.32" fill="#6fe8d8" fill-opacity="0.43"/><circle cx="47.0" cy="20.3" r="0.36" fill="#6fe8d8" fill-opacity="0.56"/><circle cx="56.8" cy="42.1" r="0.54" fill="#6fe8d8" fill-opacity="0.72"/><circle cx="41.5" cy="19.8" r="0.40" fill="#6fe8d8" fill-opacity="0.42"/><circle cx="51.8" cy="29.9" r="0.54" fill="#6fe8d8" fill-opacity="0.64"/><circle cx="46.4" cy="71.9" r="0.53" fill="#6fe8d8" fill-opacity="0.49"/><circle cx="57.4" cy="27.0" r="0.44" fill="#6fe8d8" fill-opacity="0.57"/><circle cx="24.2" cy="49.0" r="0.47" fill="#6fe8d8" fill-opacity="0.39"/><circle cx="27.8" cy="38.9" r="0.47" fill="#6fe8d8" fill-opacity="0.39"/><circle cx="37.9" cy="18.9" r="0.52" fill="#6fe8d8" fill-opacity="0.46"/><circle cx="33.4" cy="69.6" r="0.40" fill="#6fe8d8" fill-opacity="0.36"/><circle cx="58.4" cy="69.8" r="0.50" fill="#6fe8d8" fill-opacity="0.78"/><circle cx="33.6" cy="50.1" r="0.43" fill="#6fe8d8" fill-opacity="0.42"/><circle cx="58.9" cy="69.0" r="0.33" fill="#6fe8d8" fill-opacity="0.65"/><circle cx="41.0" cy="26.0" r="0.51" fill="#6fe8d8" fill-opacity="0.53"/><circle cx="21.5" cy="62.0" r="0.47" fill="#6fe8d8" fill-opacity="0.37"/><circle cx="58.1" cy="66.9" r="0.36" fill="#6fe8d8" fill-opacity="0.59"/><circle cx="53.1" cy="61.2" r="0.45" fill="#6fe8d8" fill-opacity="0.59"/><circle cx="47.1" cy="58.2" r="0.36" fill="#6fe8d8" fill-opacity="0.43"/><circle cx="41.5" cy="58.4" r="0.33" fill="#6fe8d8" fill-opacity="0.39"/><circle cx="59.8" cy="33.0" r="0.41" fill="#6fe8d8" fill-opacity="0.56"/><circle cx="42.1" cy="75.4" r="0.54" fill="#6fe8d8" fill-opacity="0.50"/><circle cx="60.9" cy="44.7" r="0.40" fill="#6fe8d8" fill-opacity="0.58"/><circle cx="57.2" cy="71.5" r="0.38" fill="#6fe8d8" fill-opacity="0.43"/><circle cx="49.1" cy="29.1" r="0.32" fill="#6fe8d8" fill-opacity="0.59"/><circle cx="56.9" cy="57.7" r="0.55" fill="#6fe8d8" fill-opacity="0.65"/><circle cx="45.9" cy="49.3" r="0.54" fill="#6fe8d8" fill-opacity="0.62"/><circle cx="36.1" cy="49.3" r="0.39" fill="#6fe8d8" fill-opacity="0.40"/><circle cx="52.2" cy="45.0" r="0.37" fill="#6fe8d8" fill-opacity="0.49"/><circle cx="42.4" cy="10.7" r="0.50" fill="#6fe8d8" fill-opacity="0.52"/><circle cx="50.5" cy="23.8" r="0.41" fill="#6fe8d8" fill-opacity="0.40"/><circle cx="55.7" cy="14.7" r="0.47" fill="#6fe8d8" fill-opacity="0.69"/><circle cx="47.5" cy="35.2" r="0.45" fill="#6fe8d8" fill-opacity="0.61"/><circle cx="49.7" cy="72.3" r="0.39" fill="#6fe8d8" fill-opacity="0.39"/><circle cx="31.4" cy="71.5" r="0.39" fill="#6fe8d8" fill-opacity="0.44"/><circle cx="56.0" cy="72.2" r="0.32" fill="#6fe8d8" fill-opacity="0.44"/><circle cx="41.7" cy="55.6" r="0.46" fill="#6fe8d8" fill-opacity="0.40"/><circle cx="67.9" cy="46.9" r="0.51" fill="#6fe8d8" fill-opacity="0.65"/><circle cx="57.2" cy="45.7" r="0.35" fill="#6fe8d8" fill-opacity="0.42"/><circle cx="55.0" cy="40.3" r="0.50" fill="#6fe8d8" fill-opacity="0.42"/><circle cx="55.7" cy="62.4" r="0.49" fill="#6fe8d8" fill-opacity="0.48"/><circle cx="56.6" cy="67.3" r="0.39" fill="#6fe8d8" fill-opacity="0.68"/><circle cx="33.3" cy="48.7" r="0.40" fill="#6fe8d8" fill-opacity="0.41"/><circle cx="46.9" cy="45.8" r="0.37" fill="#6fe8d8" fill-opacity="0.53"/><circle cx="38.6" cy="67.4" r="0.35" fill="#6fe8d8" fill-opacity="0.51"/><circle cx="52.6" cy="19.9" r="0.31" fill="#6fe8d8" fill-opacity="0.62"/><circle cx="55.9" cy="10.5" r="0.34" fill="#6fe8d8" fill-opacity="0.56"/><circle cx="54.7" cy="15.8" r="0.37" fill="#6fe8d8" fill-opacity="0.53"/><circle cx="27.5" cy="31.1" r="0.39" fill="#6fe8d8" fill-opacity="0.41"/><circle cx="31.4" cy="48.7" r="0.33" fill="#6fe8d8" fill-opacity="0.38"/><circle cx="53.5" cy="37.5" r="0.38" fill="#6fe8d8" fill-opacity="0.66"/><circle cx="57.5" cy="34.7" r="0.44" fill="#6fe8d8" fill-opacity="0.48"/><circle cx="40.6" cy="75.4" r="0.42" fill="#6fe8d8" fill-opacity="0.50"/><circle cx="46.7" cy="20.1" r="0.32" fill="#6fe8d8" fill-opacity="0.47"/><circle cx="43.4" cy="70.6" r="0.34" fill="#6fe8d8" fill-opacity="0.58"/><circle cx="49.7" cy="17.4" r="0.40" fill="#6fe8d8" fill-opacity="0.43"/><circle cx="59.5" cy="54.9" r="0.50" fill="#6fe8d8" fill-opacity="0.53"/><circle cx="55.8" cy="29.6" r="0.54" fill="#6fe8d8" fill-opacity="0.42"/><circle cx="59.4" cy="41.0" r="0.40" fill="#6fe8d8" fill-opacity="0.39"/><circle cx="39.4" cy="55.0" r="0.42" fill="#6fe8d8" fill-opacity="0.50"/><circle cx="50.2" cy="35.9" r="0.55" fill="#6fe8d8" fill-opacity="0.36"/><circle cx="36.5" cy="17.1" r="0.31" fill="#6fe8d8" fill-opacity="0.47"/><circle cx="39.6" cy="46.4" r="0.40" fill="#6fe8d8" fill-opacity="0.44"/><circle cx="58.3" cy="43.8" r="0.31" fill="#6fe8d8" fill-opacity="0.50"/><circle cx="48.0" cy="20.6" r="0.40" fill="#6fe8d8" fill-opacity="0.64"/><circle cx="36.8" cy="46.7" r="0.34" fill="#6fe8d8" fill-opacity="0.40"/><circle cx="45.5" cy="33.5" r="0.49" fill="#6fe8d8" fill-opacity="0.60"/><circle cx="61.4" cy="46.7" r="0.36" fill="#6fe8d8" fill-opacity="0.52"/><circle cx="33.1" cy="69.7" r="0.46" fill="#6fe8d8" fill-opacity="0.38"/><circle cx="56.7" cy="17.9" r="0.37" fill="#6fe8d8" fill-opacity="0.56"/><circle cx="43.5" cy="30.9" r="0.42" fill="#6fe8d8" fill-opacity="0.45"/><circle cx="56.5" cy="63.3" r="0.36" fill="#6fe8d8" fill-opacity="0.59"/><circle cx="55.6" cy="71.7" r="0.45" fill="#6fe8d8" fill-opacity="0.59"/><circle cx="45.1" cy="51.9" r="0.52" fill="#6fe8d8" fill-opacity="0.41"/><circle cx="24.1" cy="41.6" r="0.37" fill="#6fe8d8" fill-opacity="0.39"/><circle cx="30.0" cy="22.1" r="0.34" fill="#6fe8d8" fill-opacity="0.37"/><circle cx="58.6" cy="30.6" r="0.48" fill="#6fe8d8" fill-opacity="0.79"/><circle cx="60.0" cy="41.1" r="0.53" fill="#6fe8d8" fill-opacity="0.48"/><circle cx="30.9" cy="46.3" r="0.34" fill="#6fe8d8" fill-opacity="0.40"/><circle cx="52.5" cy="70.7" r="0.37" fill="#6fe8d8" fill-opacity="0.60"/><circle cx="55.7" cy="49.3" r="0.48" fill="#6fe8d8" fill-opacity="0.69"/><circle cx="46.5" cy="58.1" r="0.52" fill="#6fe8d8" fill-opacity="0.46"/><circle cx="48.9" cy="49.7" r="0.53" fill="#6fe8d8" fill-opacity="0.57"/><circle cx="55.6" cy="68.3" r="0.44" fill="#6fe8d8" fill-opacity="0.46"/><circle cx="49.6" cy="61.3" r="0.36" fill="#6fe8d8" fill-opacity="0.57"/><circle cx="34.8" cy="47.3" r="0.33" fill="#6fe8d8" fill-opacity="0.45"/><circle cx="49.6" cy="35.5" r="0.53" fill="#6fe8d8" fill-opacity="0.38"/><circle cx="28.3" cy="49.6" r="0.43" fill="#6fe8d8" fill-opacity="0.36"/><circle cx="35.8" cy="57.9" r="0.34" fill="#6fe8d8" fill-opacity="0.50"/><circle cx="56.7" cy="55.2" r="0.31" fill="#6fe8d8" fill-opacity="0.62"/><circle cx="47.5" cy="60.4" r="0.31" fill="#6fe8d8" fill-opacity="0.40"/><circle cx="41.9" cy="54.2" r="0.32" fill="#6fe8d8" fill-opacity="0.37"/><circle cx="42.3" cy="66.1" r="0.39" fill="#6fe8d8" fill-opacity="0.46"/><circle cx="65.7" cy="42.5" r="0.53" fill="#6fe8d8" fill-opacity="0.89"/><circle cx="43.3" cy="17.2" r="0.52" fill="#6fe8d8" fill-opacity="0.42"/><circle cx="40.5" cy="37.9" r="0.41" fill="#6fe8d8" fill-opacity="0.41"/><circle cx="64.4" cy="44.0" r="0.35" fill="#6fe8d8" fill-opacity="0.78"/><circle cx="58.2" cy="65.5" r="0.38" fill="#6fe8d8" fill-opacity="0.44"/><circle cx="34.9" cy="14.3" r="0.39" fill="#6fe8d8" fill-opacity="0.37"/><circle cx="19.8" cy="49.7" r="0.47" fill="#6fe8d8" fill-opacity="0.36"/><circle cx="61.1" cy="47.3" r="0.47" fill="#6fe8d8" fill-opacity="0.53"/><circle cx="30.3" cy="26.8" r="0.47" fill="#6fe8d8" fill-opacity="0.42"/><circle cx="57.3" cy="50.6" r="0.42" fill="#6fe8d8" fill-opacity="0.58"/><circle cx="61.2" cy="26.3" r="0.40" fill="#6fe8d8" fill-opacity="0.77"/><circle cx="37.3" cy="27.6" r="0.39" fill="#6fe8d8" fill-opacity="0.48"/><circle cx="34.6" cy="47.1" r="0.32" fill="#6fe8d8" fill-opacity="0.47"/><circle cx="58.4" cy="57.2" r="0.41" fill="#6fe8d8" fill-opacity="0.77"/><circle cx="49.6" cy="20.8" r="0.30" fill="#6fe8d8" fill-opacity="0.48"/><circle cx="51.7" cy="55.8" r="0.30" fill="#6fe8d8" fill-opacity="0.54"/><circle cx="54.4" cy="54.6" r="0.42" fill="#6fe8d8" fill-opacity="0.63"/><circle cx="46.1" cy="12.8" r="0.39" fill="#6fe8d8" fill-opacity="0.35"/><circle cx="57.2" cy="10.9" r="0.51" fill="#6fe8d8" fill-opacity="0.45"/><circle cx="37.4" cy="68.9" r="0.43" fill="#6fe8d8" fill-opacity="0.50"/><circle cx="43.8" cy="34.7" r="0.35" fill="#6fe8d8" fill-opacity="0.42"/><circle cx="30.5" cy="53.8" r="0.43" fill="#6fe8d8" fill-opacity="0.40"/><circle cx="17.8" cy="54.2" r="0.35" fill="#6fe8d8" fill-opacity="0.36"/><circle cx="40.0" cy="49.5" r="0.30" fill="#6fe8d8" fill-opacity="0.54"/><circle cx="52.0" cy="15.8" r="0.39" fill="#6fe8d8" fill-opacity="0.56"/><circle cx="34.7" cy="30.1" r="0.47" fill="#6fe8d8" fill-opacity="0.39"/><circle cx="35.5" cy="28.0" r="0.43" fill="#6fe8d8" fill-opacity="0.40"/><circle cx="46.8" cy="29.8" r="0.33" fill="#6fe8d8" fill-opacity="0.37"/><circle cx="54.2" cy="30.7" r="0.52" fill="#6fe8d8" fill-opacity="0.52"/><circle cx="45.2" cy="32.9" r="0.42" fill="#6fe8d8" fill-opacity="0.36"/><circle cx="49.1" cy="35.6" r="0.35" fill="#6fe8d8" fill-opacity="0.59"/><circle cx="43.7" cy="13.5" r="0.55" fill="#6fe8d8" fill-opacity="0.43"/><circle cx="34.9" cy="33.3" r="0.54" fill="#6fe8d8" fill-opacity="0.37"/><circle cx="46.7" cy="42.7" r="0.35" fill="#6fe8d8" fill-opacity="0.42"/><circle cx="39.0" cy="67.5" r="0.34" fill="#6fe8d8" fill-opacity="0.53"/><circle cx="46.8" cy="51.2" r="0.41" fill="#6fe8d8" fill-opacity="0.45"/><circle cx="43.9" cy="65.9" r="0.54" fill="#6fe8d8" fill-opacity="0.40"/><circle cx="41.4" cy="65.9" r="0.46" fill="#6fe8d8" fill-opacity="0.48"/><circle cx="45.0" cy="66.1" r="0.36" fill="#6fe8d8" fill-opacity="0.59"/><circle cx="60.9" cy="23.5" r="0.47" fill="#6fe8d8" fill-opacity="0.62"/><circle cx="57.2" cy="66.8" r="0.50" fill="#6fe8d8" fill-opacity="0.35"/><circle cx="39.5" cy="75.1" r="0.37" fill="#6fe8d8" fill-opacity="0.39"/><circle cx="48.8" cy="10.4" r="0.34" fill="#6fe8d8" fill-opacity="0.44"/><circle cx="43.3" cy="50.4" r="0.42" fill="#6fe8d8" fill-opacity="0.47"/><circle cx="62.0" cy="38.4" r="0.55" fill="#6fe8d8" fill-opacity="0.65"/><circle cx="53.2" cy="29.8" r="0.33" fill="#6fe8d8" fill-opacity="0.64"/><circle cx="54.9" cy="50.0" r="0.36" fill="#6fe8d8" fill-opacity="0.71"/><circle cx="58.7" cy="25.7" r="0.52" fill="#6fe8d8" fill-opacity="0.36"/><circle cx="48.9" cy="57.5" r="0.53" fill="#6fe8d8" fill-opacity="0.55"/><circle cx="58.2" cy="34.7" r="0.34" fill="#6fe8d8" fill-opacity="0.49"/><circle cx="31.2" cy="26.1" r="0.52" fill="#6fe8d8" fill-opacity="0.38"/><circle cx="54.6" cy="38.1" r="0.48" fill="#6fe8d8" fill-opacity="0.60"/><circle cx="39.9" cy="51.4" r="0.41" fill="#6fe8d8" fill-opacity="0.48"/><circle cx="48.7" cy="9.1" r="0.47" fill="#6fe8d8" fill-opacity="0.39"/><circle cx="23.4" cy="38.4" r="0.34" fill="#6fe8d8" fill-opacity="0.37"/><circle cx="43.2" cy="68.5" r="0.52" fill="#6fe8d8" fill-opacity="0.41"/><circle cx="42.9" cy="34.3" r="0.41" fill="#6fe8d8" fill-opacity="0.42"/><circle cx="52.4" cy="34.9" r="0.41" fill="#6fe8d8" fill-opacity="0.69"/><circle cx="47.4" cy="74.8" r="0.43" fill="#6fe8d8" fill-opacity="0.56"/><circle cx="43.5" cy="13.4" r="0.41" fill="#6fe8d8" fill-opacity="0.50"/><circle cx="26.2" cy="48.1" r="0.37" fill="#6fe8d8" fill-opacity="0.38"/><circle cx="60.2" cy="34.3" r="0.33" fill="#6fe8d8" fill-opacity="0.69"/><circle cx="55.9" cy="23.5" r="0.45" fill="#6fe8d8" fill-opacity="0.62"/><circle cx="52.0" cy="29.2" r="0.41" fill="#6fe8d8" fill-opacity="0.53"/><circle cx="61.3" cy="40.0" r="0.38" fill="#6fe8d8" fill-opacity="0.58"/><circle cx="59.1" cy="28.3" r="0.36" fill="#6fe8d8" fill-opacity="0.65"/><circle cx="51.1" cy="21.3" r="0.36" fill="#6fe8d8" fill-opacity="0.42"/><circle cx="51.1" cy="67.6" r="0.30" fill="#6fe8d8" fill-opacity="0.69"/><circle cx="37.5" cy="63.6" r="0.51" fill="#6fe8d8" fill-opacity="0.51"/><circle cx="53.5" cy="38.1" r="0.51" fill="#6fe8d8" fill-opacity="0.68"/><circle cx="48.2" cy="49.4" r="0.42" fill="#6fe8d8" fill-opacity="0.41"/><circle cx="41.2" cy="12.2" r="0.37" fill="#6fe8d8" fill-opacity="0.45"/><circle cx="52.2" cy="14.8" r="0.49" fill="#6fe8d8" fill-opacity="0.41"/><circle cx="49.4" cy="35.8" r="0.33" fill="#6fe8d8" fill-opacity="0.47"/><circle cx="24.8" cy="64.7" r="0.38" fill="#6fe8d8" fill-opacity="0.40"/><circle cx="47.7" cy="9.9" r="0.54" fill="#7ff2e0" fill-opacity="0.77"/><circle cx="48.2" cy="8.5" r="0.59" fill="#7ff2e0" fill-opacity="0.65"/><circle cx="51.7" cy="10.5" r="0.50" fill="#7ff2e0" fill-opacity="0.72"/><circle cx="48.4" cy="10.3" r="0.46" fill="#7ff2e0" fill-opacity="0.60"/><circle cx="52.7" cy="10.2" r="0.60" fill="#7ff2e0" fill-opacity="0.56"/><circle cx="52.6" cy="8.9" r="0.55" fill="#7ff2e0" fill-opacity="0.92"/><circle cx="51.9" cy="9.9" r="0.58" fill="#7ff2e0" fill-opacity="0.76"/><circle cx="55.0" cy="10.7" r="0.46" fill="#7ff2e0" fill-opacity="0.78"/><circle cx="48.7" cy="9.6" r="0.46" fill="#7ff2e0" fill-opacity="0.94"/><circle cx="51.0" cy="10.5" r="0.54" fill="#7ff2e0" fill-opacity="0.99"/><circle cx="52.9" cy="8.7" r="0.34" fill="#7ff2e0" fill-opacity="0.88"/><circle cx="49.3" cy="8.6" r="0.58" fill="#7ff2e0" fill-opacity="0.57"/><circle cx="45.7" cy="10.0" r="0.31" fill="#7ff2e0" fill-opacity="0.98"/><circle cx="48.7" cy="8.9" r="0.49" fill="#7ff2e0" fill-opacity="0.58"/><circle cx="50.8" cy="11.6" r="0.44" fill="#7ff2e0" fill-opacity="0.88"/><circle cx="47.6" cy="9.3" r="0.32" fill="#7ff2e0" fill-opacity="0.72"/><circle cx="54.0" cy="9.9" r="0.41" fill="#7ff2e0" fill-opacity="0.77"/><circle cx="47.1" cy="8.7" r="0.57" fill="#7ff2e0" fill-opacity="0.67"/><circle cx="53.8" cy="8.8" r="0.59" fill="#7ff2e0" fill-opacity="0.60"/><circle cx="53.2" cy="9.4" r="0.45" fill="#7ff2e0" fill-opacity="0.98"/><circle cx="50.4" cy="7.9" r="0.50" fill="#7ff2e0" fill-opacity="0.62"/><circle cx="46.2" cy="8.3" r="0.57" fill="#7ff2e0" fill-opacity="0.87"/><circle cx="48.0" cy="9.8" r="0.56" fill="#7ff2e0" fill-opacity="0.99"/><circle cx="47.0" cy="9.3" r="0.32" fill="#7ff2e0" fill-opacity="0.74"/><circle cx="52.9" cy="9.2" r="0.39" fill="#7ff2e0" fill-opacity="0.79"/><circle cx="46.2" cy="8.9" r="0.55" fill="#7ff2e0" fill-opacity="0.64"/><circle cx="50.6" cy="9.9" r="0.34" fill="#7ff2e0" fill-opacity="0.67"/><circle cx="50.9" cy="8.6" r="0.40" fill="#7ff2e0" fill-opacity="0.71"/><circle cx="49.7" cy="10.1" r="0.30" fill="#7ff2e0" fill-opacity="0.89"/><circle cx="55.3" cy="9.8" r="0.52" fill="#7ff2e0" fill-opacity="0.90"/><circle cx="53.0" cy="9.9" r="0.43" fill="#7ff2e0" fill-opacity="0.60"/><circle cx="59.5" cy="17.8" r="0.33" fill="#7ff2e0" fill-opacity="0.70"/><circle cx="57.0" cy="12.5" r="0.40" fill="#7ff2e0" fill-opacity="0.58"/><circle cx="59.5" cy="22.1" r="0.44" fill="#7ff2e0" fill-opacity="0.98"/><circle cx="60.1" cy="22.1" r="0.52" fill="#7ff2e0" fill-opacity="0.80"/><circle cx="55.6" cy="21.1" r="0.51" fill="#7ff2e0" fill-opacity="0.76"/><circle cx="54.9" cy="14.9" r="0.58" fill="#7ff2e0" fill-opacity="0.65"/><circle cx="55.4" cy="11.8" r="0.42" fill="#7ff2e0" fill-opacity="0.78"/><circle cx="59.8" cy="21.3" r="0.38" fill="#7ff2e0" fill-opacity="0.63"/><circle cx="56.9" cy="13.9" r="0.60" fill="#7ff2e0" fill-opacity="0.94"/><circle cx="57.0" cy="14.2" r="0.55" fill="#7ff2e0" fill-opacity="0.69"/><circle cx="56.2" cy="13.7" r="0.44" fill="#7ff2e0" fill-opacity="0.56"/><circle cx="59.5" cy="18.2" r="0.31" fill="#7ff2e0" fill-opacity="0.67"/><circle cx="55.1" cy="15.6" r="0.39" fill="#7ff2e0" fill-opacity="0.73"/><circle cx="58.7" cy="16.3" r="0.31" fill="#7ff2e0" fill-opacity="0.90"/><circle cx="58.8" cy="17.2" r="0.59" fill="#7ff2e0" fill-opacity="0.78"/><circle cx="58.2" cy="17.4" r="0.54" fill="#7ff2e0" fill-opacity="0.64"/><circle cx="56.4" cy="10.7" r="0.53" fill="#7ff2e0" fill-opacity="0.73"/><circle cx="59.3" cy="19.0" r="0.59" fill="#7ff2e0" fill-opacity="0.76"/><circle cx="59.4" cy="19.3" r="0.60" fill="#7ff2e0" fill-opacity="0.70"/><circle cx="59.4" cy="18.9" r="0.33" fill="#7ff2e0" fill-opacity="0.84"/><circle cx="55.5" cy="9.6" r="0.38" fill="#7ff2e0" fill-opacity="0.64"/><circle cx="58.2" cy="21.2" r="0.44" fill="#7ff2e0" fill-opacity="0.96"/><circle cx="57.8" cy="18.0" r="0.55" fill="#7ff2e0" fill-opacity="0.69"/><circle cx="58.9" cy="21.0" r="0.60" fill="#7ff2e0" fill-opacity="0.84"/><circle cx="57.5" cy="18.0" r="0.43" fill="#7ff2e0" fill-opacity="0.55"/><circle cx="57.0" cy="12.5" r="0.40" fill="#7ff2e0" fill-opacity="0.63"/><circle cx="56.9" cy="14.2" r="0.33" fill="#7ff2e0" fill-opacity="0.94"/><circle cx="56.8" cy="13.5" r="0.31" fill="#7ff2e0" fill-opacity="0.83"/><circle cx="58.5" cy="20.3" r="0.35" fill="#7ff2e0" fill-opacity="0.92"/><circle cx="56.5" cy="12.4" r="0.36" fill="#7ff2e0" fill-opacity="0.88"/><circle cx="57.3" cy="17.3" r="0.45" fill="#7ff2e0" fill-opacity="0.76"/><circle cx="56.9" cy="18.9" r="0.58" fill="#7ff2e0" fill-opacity="0.78"/><circle cx="57.9" cy="12.7" r="0.45" fill="#7ff2e0" fill-opacity="0.71"/><circle cx="57.6" cy="16.7" r="0.38" fill="#7ff2e0" fill-opacity="0.69"/><circle cx="56.7" cy="13.6" r="0.45" fill="#7ff2e0" fill-opacity="0.74"/><circle cx="56.8" cy="11.7" r="0.59" fill="#7ff2e0" fill-opacity="0.93"/><circle cx="59.1" cy="18.9" r="0.49" fill="#7ff2e0" fill-opacity="0.97"/><circle cx="60.2" cy="22.9" r="0.40" fill="#7ff2e0" fill-opacity="0.63"/><circle cx="57.2" cy="11.6" r="0.39" fill="#7ff2e0" fill-opacity="0.99"/><circle cx="57.8" cy="19.1" r="0.45" fill="#7ff2e0" fill-opacity="0.77"/><circle cx="60.6" cy="22.0" r="0.38" fill="#7ff2e0" fill-opacity="0.60"/><circle cx="59.0" cy="16.2" r="0.58" fill="#7ff2e0" fill-opacity="0.89"/><circle cx="61.1" cy="28.5" r="0.51" fill="#7ff2e0" fill-opacity="0.88"/><circle cx="60.9" cy="27.2" r="0.34" fill="#7ff2e0" fill-opacity="0.69"/><circle cx="60.7" cy="24.9" r="0.42" fill="#7ff2e0" fill-opacity="0.88"/><circle cx="60.4" cy="25.2" r="0.45" fill="#7ff2e0" fill-opacity="0.91"/><circle cx="61.0" cy="22.7" r="0.45" fill="#7ff2e0" fill-opacity="0.72"/><circle cx="59.7" cy="28.2" r="0.53" fill="#7ff2e0" fill-opacity="0.97"/><circle cx="58.5" cy="25.4" r="0.52" fill="#7ff2e0" fill-opacity="0.82"/><circle cx="60.0" cy="31.4" r="0.56" fill="#7ff2e0" fill-opacity="0.64"/><circle cx="61.4" cy="30.6" r="0.43" fill="#7ff2e0" fill-opacity="0.64"/><circle cx="61.6" cy="31.8" r="0.47" fill="#7ff2e0" fill-opacity="0.91"/><circle cx="61.6" cy="34.1" r="0.37" fill="#7ff2e0" fill-opacity="0.82"/><circle cx="59.2" cy="24.6" r="0.52" fill="#7ff2e0" fill-opacity="0.99"/><circle cx="60.2" cy="27.2" r="0.38" fill="#7ff2e0" fill-opacity="0.79"/><circle cx="62.0" cy="33.9" r="0.41" fill="#7ff2e0" fill-opacity="0.94"/><circle cx="62.0" cy="31.3" r="0.34" fill="#7ff2e0" fill-opacity="0.69"/><circle cx="60.9" cy="26.9" r="0.45" fill="#7ff2e0" fill-opacity="0.71"/><circle cx="61.5" cy="29.2" r="0.56" fill="#7ff2e0" fill-opacity="0.68"/><circle cx="61.0" cy="28.4" r="0.44" fill="#7ff2e0" fill-opacity="0.58"/><circle cx="61.6" cy="31.9" r="0.53" fill="#7ff2e0" fill-opacity="0.95"/><circle cx="61.3" cy="32.4" r="0.44" fill="#7ff2e0" fill-opacity="0.61"/><circle cx="59.4" cy="23.4" r="0.51" fill="#7ff2e0" fill-opacity="0.81"/><circle cx="61.3" cy="24.8" r="0.59" fill="#7ff2e0" fill-opacity="0.68"/><circle cx="59.9" cy="26.0" r="0.43" fill="#7ff2e0" fill-opacity="0.68"/><circle cx="61.2" cy="32.0" r="0.32" fill="#7ff2e0" fill-opacity="0.71"/><circle cx="60.4" cy="31.5" r="0.47" fill="#7ff2e0" fill-opacity="0.81"/><circle cx="58.0" cy="28.2" r="0.38" fill="#7ff2e0" fill-opacity="0.90"/><circle cx="59.0" cy="24.3" r="0.47" fill="#7ff2e0" fill-opacity="0.68"/><circle cx="61.5" cy="28.0" r="0.58" fill="#7ff2e0" fill-opacity="0.74"/><circle cx="60.3" cy="24.3" r="0.36" fill="#7ff2e0" fill-opacity="0.66"/><circle cx="59.6" cy="24.1" r="0.55" fill="#7ff2e0" fill-opacity="0.84"/><circle cx="59.9" cy="30.4" r="0.39" fill="#7ff2e0" fill-opacity="0.56"/><circle cx="61.5" cy="25.5" r="0.41" fill="#7ff2e0" fill-opacity="0.78"/><circle cx="59.8" cy="26.9" r="0.40" fill="#7ff2e0" fill-opacity="0.71"/><circle cx="60.4" cy="25.1" r="0.44" fill="#7ff2e0" fill-opacity="0.80"/><circle cx="62.2" cy="32.9" r="0.58" fill="#7ff2e0" fill-opacity="0.79"/><circle cx="62.4" cy="39.1" r="0.45" fill="#7ff2e0" fill-opacity="0.62"/><circle cx="60.1" cy="35.8" r="0.33" fill="#7ff2e0" fill-opacity="0.75"/><circle cx="62.5" cy="38.1" r="0.50" fill="#7ff2e0" fill-opacity="0.75"/><circle cx="62.6" cy="38.8" r="0.36" fill="#7ff2e0" fill-opacity="0.82"/><circle cx="62.2" cy="37.1" r="0.59" fill="#7ff2e0" fill-opacity="0.57"/><circle cx="61.8" cy="37.2" r="0.55" fill="#7ff2e0" fill-opacity="1.00"/><circle cx="60.1" cy="35.0" r="0.39" fill="#7ff2e0" fill-opacity="0.65"/><circle cx="61.5" cy="40.2" r="0.46" fill="#7ff2e0" fill-opacity="0.87"/><circle cx="59.9" cy="34.7" r="0.39" fill="#7ff2e0" fill-opacity="0.84"/><circle cx="62.2" cy="34.3" r="0.38" fill="#7ff2e0" fill-opacity="0.94"/><circle cx="63.5" cy="36.6" r="0.51" fill="#7ff2e0" fill-opacity="0.99"/><circle cx="62.4" cy="35.3" r="0.51" fill="#7ff2e0" fill-opacity="0.92"/><circle cx="63.9" cy="39.5" r="0.41" fill="#7ff2e0" fill-opacity="0.71"/><circle cx="63.3" cy="37.5" r="0.45" fill="#7ff2e0" fill-opacity="0.75"/><circle cx="60.2" cy="33.2" r="0.58" fill="#7ff2e0" fill-opacity="0.81"/><circle cx="61.5" cy="35.5" r="0.34" fill="#7ff2e0" fill-opacity="0.90"/><circle cx="62.9" cy="38.2" r="0.38" fill="#7ff2e0" fill-opacity="0.65"/><circle cx="63.1" cy="36.8" r="0.57" fill="#7ff2e0" fill-opacity="0.93"/><circle cx="61.9" cy="34.4" r="0.39" fill="#7ff2e0" fill-opacity="0.68"/><circle cx="62.3" cy="37.9" r="0.58" fill="#7ff2e0" fill-opacity="0.56"/><circle cx="61.1" cy="36.3" r="0.39" fill="#7ff2e0" fill-opacity="0.83"/><circle cx="65.4" cy="43.3" r="0.33" fill="#7ff2e0" fill-opacity="0.85"/><circle cx="64.2" cy="40.0" r="0.59" fill="#7ff2e0" fill-opacity="0.76"/><circle cx="64.3" cy="44.1" r="0.33" fill="#7ff2e0" fill-opacity="0.80"/><circle cx="68.3" cy="47.4" r="0.49" fill="#7ff2e0" fill-opacity="0.70"/><circle cx="65.8" cy="45.0" r="0.41" fill="#7ff2e0" fill-opacity="0.84"/><circle cx="64.0" cy="40.9" r="0.46" fill="#7ff2e0" fill-opacity="0.95"/><circle cx="67.1" cy="47.7" r="0.60" fill="#7ff2e0" fill-opacity="0.55"/><circle cx="68.4" cy="47.3" r="0.31" fill="#7ff2e0" fill-opacity="0.71"/><circle cx="63.9" cy="40.8" r="0.31" fill="#7ff2e0" fill-opacity="0.95"/><circle cx="59.0" cy="40.6" r="0.33" fill="#7ff2e0" fill-opacity="0.89"/><circle cx="65.2" cy="44.6" r="0.48" fill="#7ff2e0" fill-opacity="0.72"/><circle cx="67.0" cy="45.2" r="0.41" fill="#7ff2e0" fill-opacity="0.95"/><circle cx="63.4" cy="43.3" r="0.42" fill="#7ff2e0" fill-opacity="0.94"/><circle cx="66.8" cy="47.2" r="0.39" fill="#7ff2e0" fill-opacity="0.56"/><circle cx="68.7" cy="47.4" r="0.48" fill="#7ff2e0" fill-opacity="0.98"/><circle cx="68.3" cy="46.8" r="0.38" fill="#7ff2e0" fill-opacity="0.59"/><circle cx="64.2" cy="45.1" r="0.31" fill="#7ff2e0" fill-opacity="0.88"/><circle cx="63.6" cy="40.9" r="0.45" fill="#7ff2e0" fill-opacity="0.92"/><circle cx="66.7" cy="44.5" r="0.52" fill="#7ff2e0" fill-opacity="0.89"/><circle cx="65.9" cy="44.2" r="0.39" fill="#7ff2e0" fill-opacity="0.92"/><circle cx="64.7" cy="42.2" r="0.35" fill="#7ff2e0" fill-opacity="0.86"/><circle cx="68.0" cy="46.8" r="0.49" fill="#7ff2e0" fill-opacity="0.93"/><circle cx="61.4" cy="41.3" r="0.36" fill="#7ff2e0" fill-opacity="0.89"/><circle cx="65.1" cy="44.3" r="0.40" fill="#7ff2e0" fill-opacity="0.88"/><circle cx="64.8" cy="42.0" r="0.46" fill="#7ff2e0" fill-opacity="0.96"/><circle cx="67.1" cy="44.8" r="0.47" fill="#7ff2e0" fill-opacity="0.62"/><circle cx="64.5" cy="42.4" r="0.42" fill="#7ff2e0" fill-opacity="0.71"/><circle cx="63.8" cy="40.8" r="0.58" fill="#7ff2e0" fill-opacity="0.75"/><circle cx="63.6" cy="51.3" r="0.47" fill="#7ff2e0" fill-opacity="0.70"/><circle cx="63.7" cy="49.2" r="0.45" fill="#7ff2e0" fill-opacity="0.78"/><circle cx="60.7" cy="50.1" r="0.44" fill="#7ff2e0" fill-opacity="0.68"/><circle cx="67.1" cy="48.9" r="0.60" fill="#7ff2e0" fill-opacity="0.88"/><circle cx="63.2" cy="49.7" r="0.58" fill="#7ff2e0" fill-opacity="0.63"/><circle cx="66.9" cy="49.8" r="0.45" fill="#7ff2e0" fill-opacity="0.98"/><circle cx="65.6" cy="48.9" r="0.42" fill="#7ff2e0" fill-opacity="0.61"/><circle cx="65.1" cy="50.9" r="0.30" fill="#7ff2e0" fill-opacity="0.60"/><circle cx="65.4" cy="50.6" r="0.34" fill="#7ff2e0" fill-opacity="0.64"/><circle cx="66.7" cy="48.6" r="0.43" fill="#7ff2e0" fill-opacity="0.66"/><circle cx="67.9" cy="48.0" r="0.55" fill="#7ff2e0" fill-opacity="0.81"/><circle cx="64.2" cy="49.7" r="0.60" fill="#7ff2e0" fill-opacity="0.72"/><circle cx="63.8" cy="49.6" r="0.33" fill="#7ff2e0" fill-opacity="0.94"/><circle cx="65.3" cy="50.0" r="0.49" fill="#7ff2e0" fill-opacity="0.62"/><circle cx="65.7" cy="49.5" r="0.34" fill="#7ff2e0" fill-opacity="0.79"/><circle cx="63.9" cy="48.4" r="0.60" fill="#7ff2e0" fill-opacity="0.90"/><circle cx="64.5" cy="49.8" r="0.41" fill="#7ff2e0" fill-opacity="0.68"/><circle cx="65.5" cy="49.5" r="0.40" fill="#7ff2e0" fill-opacity="0.94"/><circle cx="62.6" cy="50.6" r="0.34" fill="#7ff2e0" fill-opacity="0.72"/><circle cx="62.1" cy="53.0" r="0.57" fill="#7ff2e0" fill-opacity="0.70"/><circle cx="63.9" cy="53.5" r="0.31" fill="#7ff2e0" fill-opacity="0.72"/><circle cx="63.5" cy="52.0" r="0.39" fill="#7ff2e0" fill-opacity="0.90"/><circle cx="63.2" cy="51.8" r="0.53" fill="#7ff2e0" fill-opacity="0.71"/><circle cx="63.8" cy="52.0" r="0.35" fill="#7ff2e0" fill-opacity="0.66"/><circle cx="63.2" cy="51.7" r="0.55" fill="#7ff2e0" fill-opacity="0.81"/><circle cx="64.2" cy="52.0" r="0.38" fill="#7ff2e0" fill-opacity="0.73"/><circle cx="60.9" cy="53.1" r="0.52" fill="#7ff2e0" fill-opacity="0.67"/><circle cx="62.9" cy="52.9" r="0.52" fill="#7ff2e0" fill-opacity="0.94"/><circle cx="60.5" cy="57.0" r="0.34" fill="#7ff2e0" fill-opacity="0.70"/><circle cx="63.0" cy="57.0" r="0.30" fill="#7ff2e0" fill-opacity="0.58"/><circle cx="60.2" cy="57.6" r="0.41" fill="#7ff2e0" fill-opacity="0.55"/><circle cx="62.4" cy="54.3" r="0.46" fill="#7ff2e0" fill-opacity="0.57"/><circle cx="62.7" cy="55.7" r="0.55" fill="#7ff2e0" fill-opacity="0.90"/><circle cx="64.4" cy="53.7" r="0.45" fill="#7ff2e0" fill-opacity="0.89"/><circle cx="64.1" cy="53.5" r="0.53" fill="#7ff2e0" fill-opacity="0.68"/><circle cx="62.7" cy="57.9" r="0.43" fill="#7ff2e0" fill-opacity="0.92"/><circle cx="61.7" cy="55.7" r="0.35" fill="#7ff2e0" fill-opacity="0.89"/><circle cx="60.4" cy="57.3" r="0.43" fill="#7ff2e0" fill-opacity="0.62"/><circle cx="60.9" cy="62.7" r="0.38" fill="#7ff2e0" fill-opacity="0.77"/><circle cx="61.6" cy="60.9" r="0.37" fill="#7ff2e0" fill-opacity="0.72"/><circle cx="59.7" cy="59.7" r="0.60" fill="#7ff2e0" fill-opacity="0.70"/><circle cx="61.7" cy="62.5" r="0.38" fill="#7ff2e0" fill-opacity="0.85"/><circle cx="58.7" cy="64.0" r="0.56" fill="#7ff2e0" fill-opacity="0.90"/><circle cx="60.5" cy="62.3" r="0.58" fill="#7ff2e0" fill-opacity="0.59"/><circle cx="58.9" cy="63.7" r="0.48" fill="#7ff2e0" fill-opacity="0.86"/><circle cx="61.4" cy="61.6" r="0.34" fill="#7ff2e0" fill-opacity="0.83"/><circle cx="62.2" cy="58.8" r="0.39" fill="#7ff2e0" fill-opacity="0.83"/><circle cx="60.5" cy="58.4" r="0.49" fill="#7ff2e0" fill-opacity="0.68"/><circle cx="60.1" cy="61.7" r="0.32" fill="#7ff2e0" fill-opacity="0.61"/><circle cx="59.8" cy="63.9" r="0.33" fill="#7ff2e0" fill-opacity="0.82"/><circle cx="61.4" cy="58.2" r="0.56" fill="#7ff2e0" fill-opacity="0.79"/><circle cx="61.6" cy="61.4" r="0.56" fill="#7ff2e0" fill-opacity="0.97"/><circle cx="60.6" cy="63.2" r="0.45" fill="#7ff2e0" fill-opacity="0.72"/><circle cx="61.8" cy="60.7" r="0.46" fill="#7ff2e0" fill-opacity="0.82"/><circle cx="63.6" cy="58.1" r="0.36" fill="#7ff2e0" fill-opacity="0.76"/><circle cx="59.6" cy="62.5" r="0.53" fill="#7ff2e0" fill-opacity="0.80"/><circle cx="59.1" cy="63.9" r="0.49" fill="#7ff2e0" fill-opacity="0.59"/><circle cx="61.7" cy="59.6" r="0.57" fill="#7ff2e0" fill-opacity="0.57"/><circle cx="61.6" cy="59.1" r="0.52" fill="#7ff2e0" fill-opacity="0.66"/><circle cx="60.1" cy="62.2" r="0.45" fill="#7ff2e0" fill-opacity="0.76"/><circle cx="58.4" cy="62.4" r="0.54" fill="#7ff2e0" fill-opacity="0.66"/><circle cx="61.5" cy="59.0" r="0.30" fill="#7ff2e0" fill-opacity="0.82"/><circle cx="54.5" cy="70.6" r="0.44" fill="#7ff2e0" fill-opacity="0.78"/><circle cx="56.4" cy="73.9" r="0.32" fill="#7ff2e0" fill-opacity="0.83"/><circle cx="57.0" cy="72.5" r="0.45" fill="#7ff2e0" fill-opacity="0.60"/><circle cx="59.2" cy="66.2" r="0.51" fill="#7ff2e0" fill-opacity="0.99"/><circle cx="58.5" cy="69.6" r="0.33" fill="#7ff2e0" fill-opacity="0.73"/><circle cx="58.4" cy="69.9" r="0.41" fill="#7ff2e0" fill-opacity="0.59"/><circle cx="55.7" cy="72.4" r="0.34" fill="#7ff2e0" fill-opacity="0.87"/><circle cx="56.8" cy="72.1" r="0.31" fill="#7ff2e0" fill-opacity="0.86"/><circle cx="60.3" cy="65.3" r="0.44" fill="#7ff2e0" fill-opacity="0.90"/><circle cx="58.8" cy="64.9" r="0.42" fill="#7ff2e0" fill-opacity="0.93"/><circle cx="55.3" cy="73.3" r="0.36" fill="#7ff2e0" fill-opacity="0.68"/><circle cx="55.4" cy="70.2" r="0.31" fill="#7ff2e0" fill-opacity="0.86"/><circle cx="58.5" cy="69.7" r="0.37" fill="#7ff2e0" fill-opacity="0.68"/><circle cx="53.5" cy="71.5" r="0.34" fill="#7ff2e0" fill-opacity="0.94"/><circle cx="56.9" cy="70.0" r="0.32" fill="#7ff2e0" fill-opacity="0.57"/><circle cx="58.4" cy="66.3" r="0.41" fill="#7ff2e0" fill-opacity="0.96"/><circle cx="60.2" cy="65.0" r="0.52" fill="#7ff2e0" fill-opacity="0.67"/><circle cx="56.2" cy="64.2" r="0.38" fill="#7ff2e0" fill-opacity="0.78"/><circle cx="59.2" cy="67.6" r="0.40" fill="#7ff2e0" fill-opacity="0.73"/><circle cx="59.5" cy="65.3" r="0.33" fill="#7ff2e0" fill-opacity="0.70"/><circle cx="57.2" cy="70.8" r="0.47" fill="#7ff2e0" fill-opacity="0.88"/><circle cx="56.5" cy="71.9" r="0.41" fill="#7ff2e0" fill-opacity="0.65"/><circle cx="56.4" cy="74.2" r="0.55" fill="#7ff2e0" fill-opacity="0.82"/><circle cx="58.5" cy="64.8" r="0.57" fill="#7ff2e0" fill-opacity="0.84"/><circle cx="59.3" cy="66.3" r="0.60" fill="#7ff2e0" fill-opacity="0.80"/><circle cx="60.4" cy="64.8" r="0.43" fill="#7ff2e0" fill-opacity="0.85"/><circle cx="60.5" cy="65.6" r="0.49" fill="#7ff2e0" fill-opacity="0.65"/><circle cx="56.6" cy="72.4" r="0.32" fill="#7ff2e0" fill-opacity="0.85"/><circle cx="58.2" cy="72.0" r="0.31" fill="#7ff2e0" fill-opacity="0.89"/><circle cx="57.4" cy="70.5" r="0.30" fill="#7ff2e0" fill-opacity="0.58"/><circle cx="55.9" cy="72.3" r="0.31" fill="#7ff2e0" fill-opacity="0.84"/><circle cx="55.8" cy="68.5" r="0.37" fill="#7ff2e0" fill-opacity="0.82"/><circle cx="58.5" cy="66.7" r="0.39" fill="#7ff2e0" fill-opacity="0.63"/><circle cx="55.0" cy="75.1" r="0.48" fill="#7ff2e0" fill-opacity="0.64"/><circle cx="51.1" cy="75.6" r="0.49" fill="#7ff2e0" fill-opacity="0.70"/><circle cx="54.3" cy="74.1" r="0.41" fill="#7ff2e0" fill-opacity="0.90"/><circle cx="54.5" cy="75.0" r="0.38" fill="#7ff2e0" fill-opacity="0.60"/><circle cx="50.5" cy="75.1" r="0.34" fill="#7ff2e0" fill-opacity="0.73"/><circle cx="45.8" cy="75.7" r="0.43" fill="#7ff2e0" fill-opacity="0.93"/><circle cx="46.2" cy="76.0" r="0.58" fill="#7ff2e0" fill-opacity="0.92"/><circle cx="44.8" cy="76.3" r="0.44" fill="#7ff2e0" fill-opacity="0.68"/><circle cx="51.8" cy="74.1" r="0.59" fill="#7ff2e0" fill-opacity="0.96"/><circle cx="48.8" cy="76.0" r="0.45" fill="#7ff2e0" fill-opacity="0.89"/><circle cx="54.6" cy="74.3" r="0.33" fill="#7ff2e0" fill-opacity="0.93"/><circle cx="44.1" cy="77.2" r="0.54" fill="#7ff2e0" fill-opacity="0.71"/><circle cx="45.8" cy="76.4" r="0.48" fill="#7ff2e0" fill-opacity="0.98"/><circle cx="52.7" cy="75.7" r="0.31" fill="#7ff2e0" fill-opacity="0.67"/><circle cx="47.8" cy="77.2" r="0.56" fill="#7ff2e0" fill-opacity="0.99"/><circle cx="44.3" cy="76.4" r="0.43" fill="#7ff2e0" fill-opacity="0.77"/><circle cx="44.6" cy="76.9" r="0.49" fill="#7ff2e0" fill-opacity="0.90"/><circle cx="48.3" cy="75.2" r="0.52" fill="#7ff2e0" fill-opacity="0.95"/><circle cx="54.4" cy="74.2" r="0.38" fill="#7ff2e0" fill-opacity="0.84"/><circle cx="47.7" cy="74.4" r="0.38" fill="#7ff2e0" fill-opacity="0.75"/><circle cx="45.6" cy="76.0" r="0.31" fill="#7ff2e0" fill-opacity="0.72"/><circle cx="55.8" cy="74.8" r="0.60" fill="#7ff2e0" fill-opacity="0.74"/><circle cx="52.4" cy="73.9" r="0.36" fill="#7ff2e0" fill-opacity="0.90"/><circle cx="51.1" cy="74.3" r="0.43" fill="#7ff2e0" fill-opacity="1.00"/><circle cx="47.2" cy="75.4" r="0.59" fill="#7ff2e0" fill-opacity="0.87"/><circle cx="51.4" cy="74.5" r="0.56" fill="#7ff2e0" fill-opacity="0.97"/><circle cx="55.6" cy="73.4" r="0.35" fill="#7ff2e0" fill-opacity="0.57"/><circle cx="44.3" cy="76.2" r="0.39" fill="#7ff2e0" fill-opacity="0.95"/><circle cx="44.3" cy="75.8" r="0.41" fill="#7ff2e0" fill-opacity="0.78"/><circle cx="45.3" cy="76.7" r="0.36" fill="#7ff2e0" fill-opacity="0.76"/><circle cx="48.7" cy="74.7" r="0.49" fill="#7ff2e0" fill-opacity="0.66"/><circle cx="47.4" cy="74.8" r="0.38" fill="#7ff2e0" fill-opacity="0.99"/><circle cx="45.2" cy="75.1" r="0.36" fill="#7ff2e0" fill-opacity="0.81"/><circle cx="53.5" cy="75.2" r="0.50" fill="#7ff2e0" fill-opacity="0.82"/><circle cx="47.1" cy="76.2" r="0.41" fill="#7ff2e0" fill-opacity="0.66"/><circle cx="48.6" cy="74.9" r="0.38" fill="#7ff2e0" fill-opacity="0.64"/><circle cx="46.7" cy="75.8" r="0.48" fill="#7ff2e0" fill-opacity="0.63"/><circle cx="50.5" cy="75.9" r="0.32" fill="#7ff2e0" fill-opacity="0.93"/><circle cx="52.3" cy="73.3" r="0.53" fill="#7ff2e0" fill-opacity="0.98"/>
</svg>
<div class="t" style="left:330.5px;top:169.9px;font-size:17.45px;font-weight:700;color:#fbfdfd">Artificial Intelligence</div>
<div class="t" style="left:337.3px;top:187.6px;font-size:18.9px;color:#58beb6">in Digital Marketing</div>
<svg style="left:0;top:0;will-change:transform" width="802" height="574" font-family="Liberation Sans">
<text x="256.8" y="253.3" textLength="152.6" lengthAdjust="spacingAndGlyphs" font-size="8.8" fill="#4a64a6" font-weight="400" font-style="normal">Artificial Intelligence in Digital Marketing</text>
<text x="256.8" y="266.20000000000005" textLength="249.4" lengthAdjust="spacingAndGlyphs" font-size="6.3" fill="#474747" font-weight="400" font-style="normal">When we hear the term ‘artificial intelligence’ our minds automatically turn to a world ruled by</text>
<text x="256.8" y="273.8" textLength="246.0" lengthAdjust="spacingAndGlyphs" font-size="6.3" fill="#474747" font-weight="400" font-style="normal">robots, but AI is a growing resource that has many practical implementations, many that span</text>
<text x="256.8" y="281.5" textLength="102.2" lengthAdjust="spacingAndGlyphs" font-size="6.3" fill="#474747" font-weight="400" font-style="normal">beyond the realm of digital marketing.</text>
<text x="256.8" y="296.3" textLength="257.7" lengthAdjust="spacingAndGlyphs" font-size="6.3" fill="#474747" font-weight="400" font-style="normal">As our awareness of artificial intelligence grows, the hype around AI will diminish as it will become</text>
<text x="256.8" y="304.0" textLength="195.4" lengthAdjust="spacingAndGlyphs" font-size="6.3" fill="#474747" font-weight="400" font-style="normal">an expectation in our everyday lives, much like electricity and the internet.</text>
<text x="256.8" y="332.70000000000005" textLength="262.7" lengthAdjust="spacingAndGlyphs" font-size="6.3" fill="#474747" font-weight="400" font-style="normal">It is useful to have an understanding of how AI works and its various applications in everyday life, as</text>
<text x="256.8" y="340.5" textLength="104.8" lengthAdjust="spacingAndGlyphs" font-size="6.3" fill="#474747" font-weight="400" font-style="normal">well as how it might shape the future.</text>
<text x="256.8" y="354.8" textLength="262.7" lengthAdjust="spacingAndGlyphs" font-size="6.3" fill="#474747" font-weight="400" font-style="normal">In this article, we provide an explanation of several types of artificial intelligence along with working</text>
<text x="256.8" y="362.90000000000003" textLength="99.9" lengthAdjust="spacingAndGlyphs" font-size="6.3" fill="#474747" font-weight="400" font-style="normal">examples of how they are being used.</text>
<text x="256.8" y="478.20000000000005" textLength="229.0" lengthAdjust="spacingAndGlyphs" font-size="6.3" fill="#474747" font-weight="400" font-style="normal">automatically learn and improve from experience without being explicitly programmed.</text>
<text x="256.8" y="490.70000000000005" textLength="259.2" lengthAdjust="spacingAndGlyphs" font-size="6.3" fill="#474747" font-weight="400" font-style="normal">The process of machine learning uses observations or data, such as examples, direct experience, or</text>
<text x="256.8" y="498.40000000000003" textLength="264.0" lengthAdjust="spacingAndGlyphs" font-size="6.3" fill="#474747" font-weight="400" font-style="normal">instruction, in order to recognise patterns in data that we provide to make better-informed decisions</text>
<text x="256.8" y="506.20000000000005" textLength="240.3" lengthAdjust="spacingAndGlyphs" font-size="6.3" fill="#474747" font-weight="400" font-style="normal">in the future. Machine learning aims to let computers learn automatically “for themselves”,</text>
<text x="256.8" y="514.0" textLength="246.5" lengthAdjust="spacingAndGlyphs" font-size="6.3" fill="#474747" font-weight="400" font-style="normal">eliminating the need for human intervention or assistance, so systems can adjust their actions</text>
<text x="256.8" y="521.9" textLength="31.2" lengthAdjust="spacingAndGlyphs" font-size="6.3" fill="#474747" font-weight="400" font-style="normal">accordingly.</text>
<text x="256.8" y="536.6" textLength="258.2" lengthAdjust="spacingAndGlyphs" font-size="6.3" fill="#474747" font-weight="400" font-style="normal">By giving a machine lots of examples to analyse and learn from, it will develop generalisations that</text>
<text x="256.8" y="544.5" textLength="251.8" lengthAdjust="spacingAndGlyphs" font-size="6.3" fill="#474747" font-weight="400" font-style="normal">can be applied to new situations. Statistics mean machines are able to use algorithms to identify</text>
<text x="256.8" y="552.6" textLength="74.9" lengthAdjust="spacingAndGlyphs" font-size="6.3" fill="#474747" font-weight="400" font-style="normal">patterns and make decisions.</text>
<text x="256.8" y="320" textLength="85.2" lengthAdjust="spacingAndGlyphs" font-size="7.6" fill="#4a64a6" font-weight="400" font-style="normal">Defining Various Types of AI</text>
<text x="256.8" y="393.1" textLength="63.2" lengthAdjust="spacingAndGlyphs" font-size="5.9" fill="#6d82bd" font-weight="400" font-style="normal">Artificial Intelligence (AI)</text>
<text x="256.8" y="453.3" textLength="45.9" lengthAdjust="spacingAndGlyphs" font-size="5.9" fill="#6d82bd" font-weight="400" font-style="normal">Machine Learning</text>
<text x="256.8" y="410" textLength="14.5" lengthAdjust="spacingAndGlyphs" font-size="6.3" fill="#e0826a" font-weight="400" font-style="italic">Noun:</text>
<text x="275.2" y="410" textLength="239.8" lengthAdjust="spacingAndGlyphs" font-size="6.3" fill="#474747" font-weight="400" font-style="italic">“the theory and development of computer systems able to perform tasks normally requiring</text>
<text x="256.8" y="417.8" textLength="259.6" lengthAdjust="spacingAndGlyphs" font-size="6.3" fill="#474747" font-weight="400" font-style="italic">human intelligence, such as visual perception, speech recognition, decision-making, and translation</text>
<text x="256.8" y="425.6" textLength="54.9" lengthAdjust="spacingAndGlyphs" font-size="6.3" fill="#474747" font-weight="400" font-style="italic">between languages.”</text>
<text x="256.8" y="470" textLength="34.7" lengthAdjust="spacingAndGlyphs" font-size="6.3" fill="#3a3a3a" font-weight="700" font-style="normal">Explanation:</text>
<text x="293.2" y="470" textLength="210.3" lengthAdjust="spacingAndGlyphs" font-size="6.3" fill="#474747" font-weight="400" font-style="normal">Machine learning is an application of artificial intelligence that equips systems to</text>
</svg>
<!--/DOC-->

<!-- RIGHT PANEL -->
<div class="a" style="left:576px;top:32px;width:2px;height:542px;background:linear-gradient(90deg,#eeeeee,#e2e2e2)"></div>
<svg style="left:0;top:0" width="802" height="574" fill="none">
  <circle cx="594.6" cy="51" r="8.4" fill="#8c8c8c"/>
  <path d="M592.8 47 L596.8 51 L592.8 55" stroke="#f4f4f4" stroke-width="1.3"/>
  <path d="M593.6 80.6 h7.6 v6.4 h-2.6 l-1.2 1.4 l-1.2 -1.4 h-2.6z" stroke="#333" stroke-width="1.2"/>
  <path d="M597.4 82 v3.6 M595.6 83.8 h3.6" stroke="#333" stroke-width="1.1"/>
  <path d="M778.3 87 l4 -4 l4 4" stroke="#555" stroke-width="1.2"/>
</svg>
<div class="t" style="left:612.5px;top:81.2px;font-size:8.8px;color:#2a2a2a;-webkit-text-stroke:0.35px #2a2a2a;letter-spacing:-0.05px">Overall Feedback</div>
<div class="a" style="left:585px;top:98.5px;width:210px;height:2.2px;background:#666"></div>

<!-- editor -->
<div class="a" style="left:585px;top:117px;width:210px;height:76px;border:1px solid #e2e2e2;background:#fff"></div>
<div class="a" style="left:586px;top:118px;width:208px;height:42px;background:#f7f7f7;border-bottom:1px solid #e6e6e6"></div>
<svg style="left:0;top:0" width="802" height="574" fill="none" stroke="#333" stroke-width="1.1">
  
  <path d="M602.3 127.6 h3 l-1.5 1.7z" fill="#333" stroke="none"/>
  <rect x="610.5" y="122" width="0.8" height="12" fill="#ececec" stroke="none"/>
  <circle cx="617" cy="128.3" r="0.9" fill="#333" stroke="none"/><circle cx="620.5" cy="128.3" r="0.9" fill="#333" stroke="none"/><circle cx="624" cy="128.3" r="0.9" fill="#333" stroke="none"/>
  <rect x="630.3" y="122" width="0.8" height="12" fill="#ececec" stroke="none"/>
  
  <path d="M647.2 127.6 h3 l-1.5 1.7z" fill="#333" stroke="none"/>
  <rect x="656.5" y="122" width="0.8" height="12" fill="#ececec" stroke="none"/>
  <path d="M664.5 124.5 l-1.8 1.6 l1.8 1.6 M662.8 126.1 h5 c1.6 0 2.7 1.1 2.7 2.7 s-1.1 2.7 -2.7 2.7 h-4.5" stroke-width="1.2"/>
  <path d="M684 126 h-1.5 c-1.1 0 -1.8 0.9 -1.8 2 s0.7 2 1.8 2 h1.5 M687 126 h1.5 c1.1 0 1.8 0.9 1.8 2 s-0.7 2 -1.8 2 h-1.5 M683.5 128 h4" stroke-width="1.1"/>
  <circle cx="704.7" cy="128.3" r="4" stroke-width="1.2"/><path d="M702.7 128.3 h4 M704.7 126.3 v4" stroke-width="1.2"/>
  <path d="M712 127.6 h3 l-1.5 1.7z" fill="#333" stroke="none"/>
  <!-- av icon -->
  <rect x="589" y="146" width="6.6" height="6.6" rx="0.8" fill="#333" stroke="none"/><path d="M595.2 148 l2.4 -1.2 v5.2 l-2.4 -1.2z" fill="#333" stroke="none"/><rect x="590.6" y="148.6" width="2.6" height="1.6" fill="#f7f7f7" stroke="none"/>
</svg>
<div class="t" style="left:589.2px;top:122.3px;font-family:'Liberation Serif',serif;font-size:12.6px;color:#333">T</div>
<div class="t" style="left:635.2px;top:123.2px;font-size:10.2px;font-weight:700;color:#333">&#182;</div>
<div class="t" style="left:601.5px;top:146px;font-size:7.45px;color:#333">Audio/Video Recording</div>
<div class="t" style="left:593px;top:168.5px;font-size:7.3px;font-style:italic;color:#888">Enter your feedback</div>
<div class="a" style="left:690px;top:199.5px;width:36.5px;height:19px;background:#e2e2e2;border-radius:1px"></div>
<div class="t" style="left:696.6px;top:206.2px;font-size:7.6px;color:#333;-webkit-text-stroke:0.35px #333">Cancel</div>
<div class="a" style="left:732.5px;top:199.5px;width:62px;height:19px;background:#e9e9e9;border-radius:1px"></div>
<div class="t" style="left:739.5px;top:206.3px;font-size:7.4px;color:#b0b0b0">Save Changes</div>

<!-- MENU -->
<div class="a" style="left:44.5px;top:90px;width:88px;height:85.5px;background:#fff;box-shadow:0 1px 3px rgba(0,0,0,0.22)"></div>
<div class="a" style="left:44.5px;top:153.3px;width:88px;height:18.5px;background:#4a2ee0"></div>
<svg style="left:0;top:0" width="802" height="574" fill="none" stroke="#555" stroke-width="1">
  <!-- thumbnails icon -->
  <rect x="70" y="98.5" width="3" height="3.3"/><rect x="70" y="102.8" width="3" height="3.3"/><rect x="70" y="107.1" width="3" height="3.3"/><rect x="74.5" y="98.5" width="7" height="11.9"/>
  <!-- outline icon -->
  <rect x="70" y="118" width="11.5" height="12"/><path d="M72 121 h1 M75 121 h4.5 M72 124 h1 M75 124 h4.5 M72 127 h1 M75 127 h4.5"/>
  <!-- annotations -->
  <rect x="70.6" y="137.2" width="6.6" height="3.4" fill="#777" stroke="none"/><circle cx="77.4" cy="143.4" r="2.1" stroke-width="1.1"/><path d="M70.4 148 c3.5 -0.8 7.5 -2 11.4 -3.8" stroke-width="1.1"/>
  <!-- bookmarks -->
  <path d="M52.5 161.5 l3 3 l5.5 -5.5" stroke="#fff" stroke-width="1.4"/>
  <path d="M70.5 156 h10.5 v12 l-5.25 -4 l-5.25 4z" stroke="#fff" stroke-width="1.2"/>
</svg>
<div class="t" style="left:89px;top:101px;font-size:7px;color:#4a4a4a;-webkit-text-stroke:0.3px #4a4a4a">Thumbnails</div>
<div class="t" style="left:89px;top:120.5px;font-size:7px;color:#4a4a4a;-webkit-text-stroke:0.3px #4a4a4a">Outline</div>
<div class="t" style="left:89px;top:139.5px;font-size:7px;color:#4a4a4a;-webkit-text-stroke:0.3px #4a4a4a">Annotations</div>
<div class="t" style="left:89px;top:158.5px;font-size:7px;color:#e8e4ff;-webkit-text-stroke:0.3px #e8e4ff">Bookmarks</div>

<!-- BLUE HIGHLIGHT -->
<div class="a" style="left:31px;top:53px;width:121.2px;height:137.5px;border:5px solid #1778b3;border-radius:15px;z-index:40"></div>

<!-- frame border -->
<div class="a" style="left:0;top:0;width:802px;height:574px;border-top:1.5px solid #7a7a7a;border-left:1.5px solid #4a4a4a;border-right:1px solid #3a3a3a;border-bottom:1px solid #3a3a3a;z-index:50;pointer-events:none"></div>
<div class="a" style="left:0;top:572px;width:802px;height:1px;background:#8a8a8a;z-index:49"></div>
<div class="a" style="left:800px;top:32px;width:1px;height:542px;background:#a0a0a0;z-index:49"></div>

</div>
</body></html>
